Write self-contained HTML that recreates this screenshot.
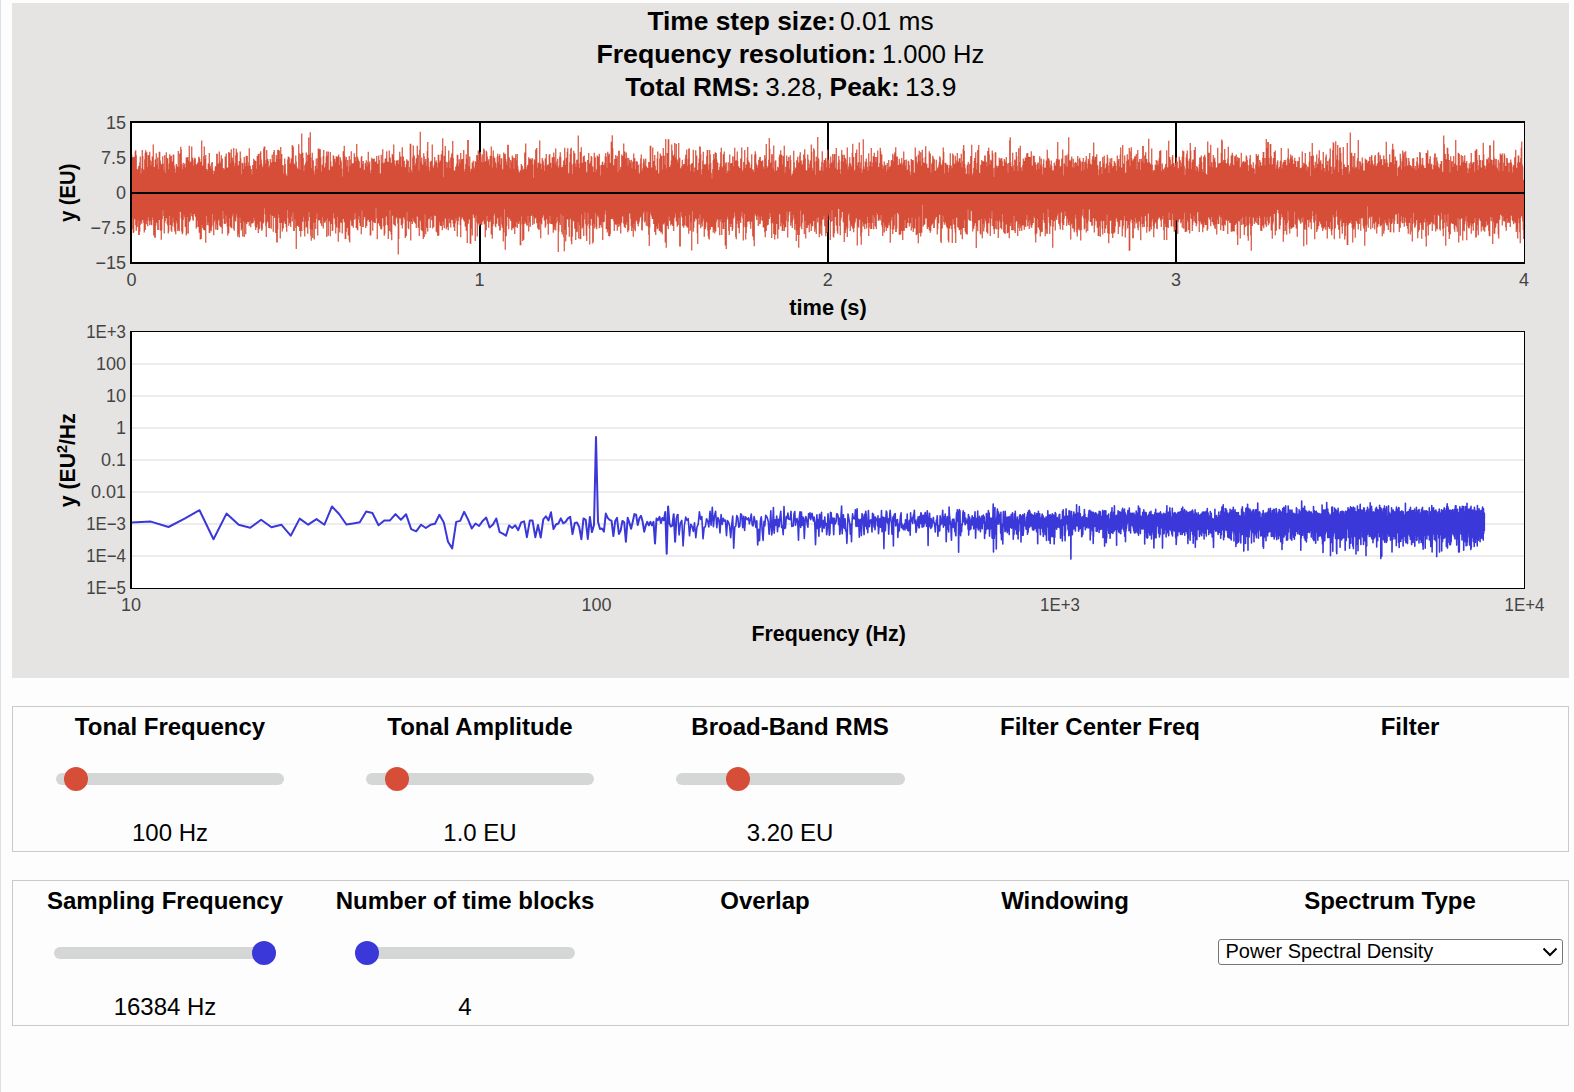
<!DOCTYPE html>
<html><head><meta charset="utf-8">
<style>
html,body{margin:0;padding:0;background:#fdfdfd;width:1574px;height:1092px;overflow:hidden;position:relative;font-family:"Liberation Sans",sans-serif;}
#stripe{position:absolute;left:0;top:0;width:1px;height:1092px;background:#dde1e4;}
#panel{position:absolute;left:12px;top:3px;width:1557px;height:675px;background:#e5e4e2;}
svg{position:absolute;left:0;top:0;}
.box{position:absolute;left:12px;width:1555px;height:144px;border:1px solid #cacac8;}
.t{position:absolute;font-weight:bold;font-size:24px;color:#000;white-space:nowrap;line-height:1;}
.v{position:absolute;font-size:24px;color:#000;white-space:nowrap;line-height:1;}
.track{position:absolute;height:12px;border-radius:6px;background:#d5d7d6;}
.th{position:absolute;width:24px;height:24px;border-radius:50%;}
.r{background:#d64e38;}
.b{background:#3a38d9;}
</style></head>
<body>
<div id="stripe"></div>
<div id="panel"></div>
<svg width="1574" height="680" viewBox="0 0 1574 680" font-family="Liberation Sans, sans-serif">
  <!-- header -->
  <g font-size="26" fill="#000">
    <text x="647.4" y="29.8" font-weight="bold" textLength="188.4" lengthAdjust="spacingAndGlyphs">Time step size:</text>
    <text x="840" y="29.8" textLength="93.6" lengthAdjust="spacingAndGlyphs">0.01 ms</text>
    <text x="596.4" y="62.8" font-weight="bold" textLength="280" lengthAdjust="spacingAndGlyphs">Frequency resolution:</text>
    <text x="882" y="62.8" textLength="102.2" lengthAdjust="spacingAndGlyphs">1.000 Hz</text>
    <text x="625.2" y="95.9" font-weight="bold" textLength="134.6" lengthAdjust="spacingAndGlyphs">Total RMS:</text>
    <text x="765.2" y="95.9" textLength="57.8" lengthAdjust="spacingAndGlyphs">3.28,</text>
    <text x="829.6" y="95.9" font-weight="bold" textLength="70.2" lengthAdjust="spacingAndGlyphs">Peak:</text>
    <text x="905" y="95.9" textLength="51.4" lengthAdjust="spacingAndGlyphs">13.9</text>
  </g>

  <!-- plot 1 -->
  <rect x="131" y="122" width="1393" height="141" fill="#fff"/>
  <g fill="#000">
    <rect x="479" y="122" width="2" height="141"/>
    <rect x="827" y="122" width="2" height="141"/>
    <rect x="1175" y="122" width="2" height="141"/>
  </g>
  <path d="M131.25 154.8V223.5M131.75 154.8V217.5M132.25 157.9V215.8M132.75 157.2V229.2M133.25 157.2V233.0M133.75 169.8V232.2M134.25 156.8V219.2M134.75 170.8V219.2M135.25 151.5V210.8M135.75 150.3V225.2M136.25 155.3V230.7M136.75 169.0V217.1M137.25 169.8V227.0M137.75 173.9V220.3M138.25 168.5V216.3M138.75 166.0V234.9M139.25 170.6V234.9M139.75 162.6V231.8M140.25 156.6V224.8M140.75 173.8V221.4M141.25 174.9V219.3M141.75 168.2V223.8M142.25 150.0V210.6M142.75 156.1V220.1M143.25 169.3V219.1M143.75 173.5V222.7M144.25 169.7V232.5M144.75 159.3V225.0M145.25 152.7V230.1M145.75 150.2V204.9M146.25 160.2V224.2M146.75 152.3V211.5M147.25 166.9V220.4M147.75 174.1V226.2M148.25 155.2V217.3M148.75 155.2V205.7M149.25 166.4V220.9M149.75 151.8V225.2M150.25 160.0V217.0M150.75 169.5V220.9M151.25 165.4V224.4M151.75 161.2V225.3M152.25 156.5V216.9M152.75 162.0V217.4M153.25 144.6V219.9M153.75 174.2V235.6M154.25 167.1V231.2M154.75 168.7V237.8M155.25 159.4V237.8M155.75 161.7V225.8M156.25 153.2V218.4M156.75 165.1V222.7M157.25 164.6V219.2M157.75 157.6V230.0M158.25 170.0V230.0M158.75 169.0V220.1M159.25 151.8V220.1M159.75 151.8V217.9M160.25 160.6V230.3M160.75 163.5V230.8M161.25 173.3V239.8M161.75 164.2V230.3M162.25 170.7V218.9M162.75 156.3V210.2M163.25 163.4V202.6M163.75 170.2V216.0M164.25 173.1V233.6M164.75 155.2V223.0M165.25 172.9V221.1M165.75 173.0V217.8M166.25 152.3V218.3M166.75 162.7V204.5M167.25 158.2V223.9M167.75 158.2V225.4M168.25 169.3V233.6M168.75 175.1V231.6M169.25 163.6V216.0M169.75 154.3V209.0M170.25 156.4V225.1M170.75 169.3V212.2M171.25 155.7V230.3M171.75 176.5V231.8M172.25 161.4V225.8M172.75 161.4V217.7M173.25 154.5V211.6M173.75 154.7V222.7M174.25 165.6V227.2M174.75 168.5V231.6M175.25 172.8V227.1M175.75 175.3V234.3M176.25 164.0V220.9M176.75 165.7V206.1M177.25 167.1V223.6M177.75 173.5V231.1M178.25 151.1V228.9M178.75 167.3V227.1M179.25 175.6V231.2M179.75 153.6V210.5M180.25 159.5V212.1M180.75 146.8V210.1M181.25 149.6V218.4M181.75 164.3V231.6M182.25 169.2V234.3M182.75 175.6V232.8M183.25 162.7V219.9M183.75 166.3V210.7M184.25 167.4V215.2M184.75 163.4V217.6M185.25 167.8V227.0M185.75 171.5V227.0M186.25 157.4V235.4M186.75 157.4V233.5M187.25 162.0V212.1M187.75 157.0V217.0M188.25 160.2V233.7M188.75 160.2V218.1M189.25 145.7V222.0M189.75 175.6V214.8M190.25 162.5V220.3M190.75 161.4V213.0M191.25 161.4V208.9M191.75 146.5V216.2M192.25 181.5V214.5M192.75 157.8V219.6M193.25 165.4V220.7M193.75 169.5V211.5M194.25 160.3V213.9M194.75 157.8V212.3M195.25 158.5V215.9M195.75 164.2V217.0M196.25 164.3V228.5M196.75 164.6V227.0M197.25 165.8V220.8M197.75 162.5V209.1M198.25 162.5V226.9M198.75 156.8V214.7M199.25 157.4V232.8M199.75 159.0V232.8M200.25 171.2V239.5M200.75 161.7V220.3M201.25 163.0V239.0M201.75 140.6V212.0M202.25 169.0V225.1M202.75 165.6V228.2M203.25 171.2V211.3M203.75 155.9V229.9M204.25 146.5V226.6M204.75 163.7V230.6M205.25 158.8V230.6M205.75 154.9V242.8M206.25 174.0V215.8M206.75 168.9V207.1M207.25 177.5V225.2M207.75 170.8V222.4M208.25 163.6V218.3M208.75 163.2V225.6M209.25 153.1V232.9M209.75 164.2V232.9M210.25 166.1V226.9M210.75 172.0V230.0M211.25 168.6V231.2M211.75 162.8V227.0M212.25 162.0V214.1M212.75 169.8V214.1M213.25 174.1V225.3M213.75 176.1V235.3M214.25 171.0V221.7M214.75 171.7V217.2M215.25 167.3V219.5M215.75 166.1V229.4M216.25 169.4V224.4M216.75 153.8V221.1M217.25 153.8V230.0M217.75 174.6V229.8M218.25 163.4V220.5M218.75 168.4V219.5M219.25 151.4V209.4M219.75 161.2V225.8M220.25 163.2V225.8M220.75 165.4V227.0M221.25 155.2V227.6M221.75 162.2V218.0M222.25 158.6V233.8M222.75 168.9V211.1M223.25 168.1V207.3M223.75 169.8V218.8M224.25 175.3V223.7M224.75 168.6V218.9M225.25 156.4V224.1M225.75 161.9V215.6M226.25 153.5V210.0M226.75 168.1V222.7M227.25 167.8V226.6M227.75 167.6V235.6M228.25 171.4V214.9M228.75 152.0V233.2M229.25 164.5V218.3M229.75 152.8V204.2M230.25 167.8V226.3M230.75 162.8V227.6M231.25 149.2V217.6M231.75 168.7V228.2M232.25 157.5V216.4M232.75 160.7V212.9M233.25 163.1V213.8M233.75 147.9V229.0M234.25 169.0V230.7M234.75 166.3V220.7M235.25 163.1V219.7M235.75 155.3V221.5M236.25 148.7V214.5M236.75 159.7V204.0M237.25 152.6V217.6M237.75 165.2V236.7M238.25 174.8V234.0M238.75 165.6V224.7M239.25 161.0V237.5M239.75 164.3V209.6M240.25 151.6V217.8M240.75 158.2V223.0M241.25 174.2V230.5M241.75 174.4V228.6M242.25 162.7V222.4M242.75 163.4V236.4M243.25 172.7V214.4M243.75 169.0V221.4M244.25 156.9V236.9M244.75 163.1V212.4M245.25 166.2V222.4M245.75 175.7V234.3M246.25 155.8V215.1M246.75 164.0V224.1M247.25 155.9V213.5M247.75 171.7V221.9M248.25 166.0V221.9M248.75 162.2V209.9M249.25 148.3V225.8M249.75 168.7V220.9M250.25 165.7V219.0M250.75 173.3V227.2M251.25 169.1V221.5M251.75 174.6V223.6M252.25 180.4V223.6M252.75 164.9V217.5M253.25 167.8V222.7M253.75 158.8V213.9M254.25 165.0V217.7M254.75 160.3V221.1M255.25 169.4V226.6M255.75 160.9V230.0M256.25 168.7V223.1M256.75 170.5V227.4M257.25 156.1V216.9M257.75 164.0V224.3M258.25 154.0V232.9M258.75 154.0V229.2M259.25 164.8V229.2M259.75 177.8V216.5M260.25 153.0V221.7M260.75 151.2V221.4M261.25 159.4V227.8M261.75 163.7V230.8M262.25 167.5V229.4M262.75 178.8V223.6M263.25 166.0V223.6M263.75 148.6V221.9M264.25 146.4V204.0M264.75 146.4V208.2M265.25 166.4V214.2M265.75 163.6V226.3M266.25 160.0V237.1M266.75 150.0V223.3M267.25 167.5V221.4M267.75 158.8V206.1M268.25 161.1V221.5M268.75 167.5V228.0M269.25 167.5V218.5M269.75 165.4V228.2M270.25 159.1V214.4M270.75 169.9V210.4M271.25 162.4V228.8M271.75 167.1V215.4M272.25 154.4V212.8M272.75 172.0V215.9M273.25 161.5V231.7M273.75 152.0V211.5M274.25 150.1V216.0M274.75 162.4V218.0M275.25 162.0V218.0M275.75 176.6V233.1M276.25 154.9V225.3M276.75 172.6V242.4M277.25 158.8V242.4M277.75 150.0V229.5M278.25 149.8V214.5M278.75 166.9V210.8M279.25 150.6V218.0M279.75 161.8V223.1M280.25 159.3V238.5M280.75 146.9V223.1M281.25 158.0V223.1M281.75 154.1V212.7M282.25 171.7V231.5M282.75 165.1V228.4M283.25 177.0V228.4M283.75 173.5V222.7M284.25 165.5V220.9M284.75 158.5V202.4M285.25 164.0V223.9M285.75 172.9V217.9M286.25 174.9V227.2M286.75 175.9V231.7M287.25 180.2V209.9M287.75 159.5V209.0M288.25 156.4V218.2M288.75 156.9V225.7M289.25 157.4V211.8M289.75 176.9V223.2M290.25 164.1V222.8M290.75 162.5V226.9M291.25 158.5V216.5M291.75 159.3V212.3M292.25 145.1V221.4M292.75 162.1V205.3M293.25 146.5V212.5M293.75 173.7V230.9M294.25 163.4V230.9M294.75 164.7V219.3M295.25 169.0V201.9M295.75 155.6V228.1M296.25 161.4V249.0M296.75 166.7V224.6M297.25 171.5V225.9M297.75 168.6V222.5M298.25 172.1V225.2M298.75 144.3V226.9M299.25 153.1V219.9M299.75 170.4V231.0M300.25 169.8V222.1M300.75 154.1V236.7M301.25 175.5V230.2M301.75 133.5V231.0M302.25 166.8V213.0M302.75 152.8V221.8M303.25 158.0V215.8M303.75 175.1V216.7M304.25 171.0V230.3M304.75 165.3V236.5M305.25 164.6V221.2M305.75 162.8V214.2M306.25 152.6V227.6M306.75 161.2V227.3M307.25 171.8V222.6M307.75 154.7V233.8M308.25 158.5V221.1M308.75 137.5V212.1M309.25 157.5V210.7M309.75 154.3V217.1M310.25 132.2V228.9M310.75 157.5V235.8M311.25 175.7V240.7M311.75 168.1V226.2M312.25 152.8V229.4M312.75 160.3V237.9M313.25 160.4V209.8M313.75 170.6V222.8M314.25 177.1V239.6M314.75 174.2V222.6M315.25 165.9V220.3M315.75 173.2V228.9M316.25 158.6V219.1M316.75 168.8V212.8M317.25 172.4V213.6M317.75 158.2V235.6M318.25 148.6V219.5M318.75 148.6V220.4M319.25 153.4V213.5M319.75 149.2V220.3M320.25 149.2V216.5M320.75 157.6V223.6M321.25 171.6V223.2M321.75 174.3V226.0M322.25 164.8V214.2M322.75 164.6V216.9M323.25 156.1V228.5M323.75 150.1V220.0M324.25 180.0V221.2M324.75 168.1V222.9M325.25 166.7V221.8M325.75 163.0V220.1M326.25 156.5V214.6M326.75 151.5V237.0M327.25 159.6V218.6M327.75 155.4V218.6M328.25 151.4V235.8M328.75 170.1V213.2M329.25 174.7V221.5M329.75 169.7V213.9M330.25 152.0V236.3M330.75 161.2V209.4M331.25 166.7V224.1M331.75 178.7V224.1M332.25 166.3V231.0M332.75 167.4V230.5M333.25 155.3V213.2M333.75 156.3V211.2M334.25 167.0V218.5M334.75 158.9V215.0M335.25 162.2V224.5M335.75 172.1V233.4M336.25 156.2V222.7M336.75 165.2V227.5M337.25 156.7V213.3M337.75 156.4V216.9M338.25 156.4V241.8M338.75 154.5V227.9M339.25 168.7V225.5M339.75 165.2V232.4M340.25 157.2V214.4M340.75 159.7V222.5M341.25 161.5V209.8M341.75 168.6V223.0M342.25 176.6V233.4M342.75 177.5V217.3M343.25 151.2V219.1M343.75 165.0V208.3M344.25 145.8V222.3M344.75 155.8V215.0M345.25 159.4V239.1M345.75 169.5V239.1M346.25 157.0V231.9M346.75 173.8V227.9M347.25 166.2V227.7M347.75 160.0V222.5M348.25 172.5V235.4M348.75 171.8V225.5M349.25 156.0V240.2M349.75 166.3V242.5M350.25 173.5V219.0M350.75 159.4V219.8M351.25 151.3V221.2M351.75 163.8V225.8M352.25 164.3V225.8M352.75 163.6V220.2M353.25 163.0V227.8M353.75 171.3V213.1M354.25 153.2V219.8M354.75 159.6V212.9M355.25 157.0V206.1M355.75 161.2V218.7M356.25 163.7V228.0M356.75 143.9V218.2M357.25 156.6V229.8M357.75 157.5V230.3M358.25 159.6V219.4M358.75 162.1V215.3M359.25 161.3V216.1M359.75 168.1V223.0M360.25 173.8V225.9M360.75 167.8V226.0M361.25 157.3V234.3M361.75 155.9V208.7M362.25 164.1V210.4M362.75 164.4V226.9M363.25 160.9V226.9M363.75 177.4V219.4M364.25 170.1V216.5M364.75 169.4V217.1M365.25 163.2V201.7M365.75 168.3V228.0M366.25 160.2V218.1M366.75 173.9V226.1M367.25 166.6V220.7M367.75 161.8V216.9M368.25 151.7V219.7M368.75 164.3V206.9M369.25 166.4V222.1M369.75 161.4V217.5M370.25 172.9V235.4M370.75 177.0V235.4M371.25 170.1V216.5M371.75 157.7V220.5M372.25 162.5V213.2M372.75 159.1V230.7M373.25 159.1V217.5M373.75 170.7V222.2M374.25 158.5V220.4M374.75 162.0V223.1M375.25 161.9V223.1M375.75 161.6V208.3M376.25 165.9V208.0M376.75 156.0V218.6M377.25 169.2V239.2M377.75 163.8V215.2M378.25 167.5V223.5M378.75 155.5V206.7M379.25 159.9V223.2M379.75 175.5V225.9M380.25 173.5V226.2M380.75 174.8V228.8M381.25 154.7V229.6M381.75 163.2V228.4M382.25 165.1V210.0M382.75 149.2V218.2M383.25 163.6V217.0M383.75 168.4V226.3M384.25 162.6V235.8M384.75 170.6V233.8M385.25 158.8V225.5M385.75 161.9V215.0M386.25 157.9V216.5M386.75 151.2V215.3M387.25 174.0V224.7M387.75 161.8V225.5M388.25 161.8V238.9M388.75 165.3V222.1M389.25 150.5V231.1M389.75 168.3V206.9M390.25 157.5V210.3M390.75 168.8V231.9M391.25 162.8V234.6M391.75 167.5V240.3M392.25 154.1V208.2M392.75 155.2V215.8M393.25 165.5V215.8M393.75 144.6V224.1M394.25 160.2V225.1M394.75 163.7V215.1M395.25 166.1V226.2M395.75 167.7V219.2M396.25 160.5V207.7M396.75 160.4V217.5M397.25 164.1V212.6M397.75 160.2V223.6M398.25 173.6V254.4M398.75 164.0V239.0M399.25 159.4V215.9M399.75 151.8V218.5M400.25 164.4V218.5M400.75 156.6V216.2M401.25 166.7V225.0M401.75 175.0V219.6M402.25 147.3V228.4M402.75 167.7V223.5M403.25 156.5V214.4M403.75 161.5V217.5M404.25 160.8V217.5M404.75 167.1V219.4M405.25 169.3V238.0M405.75 167.7V220.5M406.25 164.2V236.2M406.75 159.2V211.2M407.25 160.4V212.0M407.75 168.0V221.0M408.25 160.7V227.9M408.75 172.3V229.2M409.25 172.6V222.1M409.75 166.9V221.2M410.25 143.8V220.3M410.75 143.8V240.4M411.25 169.8V217.2M411.75 172.3V221.8M412.25 178.7V224.0M412.75 157.6V218.2M413.25 145.6V217.6M413.75 162.3V221.6M414.25 155.5V210.5M414.75 165.7V222.7M415.25 173.4V220.0M415.75 163.3V223.9M416.25 158.3V228.1M416.75 159.8V215.9M417.25 145.7V205.6M417.75 163.2V216.9M418.25 154.7V227.8M418.75 170.4V227.5M419.25 171.9V236.1M419.75 149.8V220.0M420.25 131.8V217.6M420.75 162.5V221.4M421.25 161.9V230.0M421.75 157.5V219.1M422.25 168.6V231.2M422.75 164.6V215.6M423.25 164.6V238.9M423.75 153.2V237.0M424.25 156.6V237.0M424.75 163.2V210.3M425.25 161.8V214.4M425.75 158.9V234.3M426.25 165.7V222.1M426.75 166.9V227.8M427.25 151.1V209.9M427.75 142.0V231.5M428.25 158.0V219.6M428.75 167.0V216.6M429.25 172.4V218.5M429.75 171.1V218.8M430.25 161.7V228.0M430.75 163.7V205.8M431.25 160.8V216.3M431.75 160.8V220.3M432.25 144.6V212.2M432.75 166.5V228.4M433.25 173.2V215.0M433.75 168.3V226.9M434.25 164.8V215.2M434.75 157.1V213.2M435.25 162.0V216.1M435.75 166.3V206.9M436.25 160.5V231.7M436.75 162.9V231.7M437.25 167.6V232.7M437.75 175.6V236.0M438.25 154.7V217.4M438.75 154.7V235.4M439.25 167.2V221.6M439.75 162.5V221.7M440.25 160.6V225.2M440.75 165.7V226.1M441.25 154.2V226.1M441.75 162.5V219.6M442.25 150.5V230.3M442.75 138.3V221.4M443.25 178.0V219.7M443.75 176.9V225.3M444.25 155.8V228.3M444.75 171.1V212.6M445.25 146.0V218.5M445.75 164.4V215.0M446.25 161.8V229.3M446.75 167.8V219.6M447.25 170.8V227.2M447.75 162.3V227.2M448.25 167.3V230.3M448.75 150.5V214.0M449.25 160.4V218.6M449.75 167.9V223.2M450.25 174.1V219.8M450.75 157.4V227.6M451.25 157.4V219.4M451.75 154.0V204.5M452.25 152.8V219.9M452.75 141.1V219.9M453.25 157.9V223.8M453.75 172.2V227.2M454.25 170.2V224.4M454.75 176.9V231.0M455.25 170.9V223.5M455.75 166.6V218.3M456.25 173.1V216.3M456.75 163.8V220.8M457.25 154.8V236.6M457.75 154.8V224.5M458.25 174.1V221.1M458.75 166.0V217.4M459.25 159.3V216.5M459.75 163.3V213.3M460.25 171.7V225.1M460.75 153.1V237.3M461.25 171.8V219.6M461.75 159.7V214.0M462.25 158.9V217.6M462.75 171.5V215.9M463.25 158.8V218.9M463.75 150.1V219.9M464.25 174.4V221.5M464.75 171.5V214.5M465.25 169.0V226.5M465.75 164.1V224.6M466.25 154.3V230.7M466.75 158.7V218.4M467.25 167.1V243.0M467.75 140.1V218.6M468.25 140.1V223.8M468.75 165.9V218.9M469.25 168.4V219.5M469.75 156.4V211.3M470.25 171.6V243.8M470.75 171.4V243.8M471.25 168.8V212.2M471.75 178.1V228.8M472.25 162.5V235.5M472.75 166.5V212.7M473.25 160.8V214.1M473.75 166.6V215.2M474.25 168.5V218.0M474.75 180.7V217.3M475.25 161.3V241.0M475.75 162.3V215.6M476.25 170.7V215.6M476.75 154.9V222.6M477.25 155.6V236.5M477.75 172.2V224.3M478.25 150.4V210.4M478.75 168.0V223.1M479.25 159.9V225.9M479.75 153.4V216.2M480.25 151.9V224.6M480.75 156.5V224.3M481.25 161.9V220.4M481.75 174.9V224.9M482.25 154.2V216.0M482.75 162.5V221.7M483.25 165.8V218.9M483.75 148.5V220.1M484.25 149.7V224.2M484.75 162.2V213.1M485.25 161.2V237.3M485.75 178.1V224.8M486.25 150.7V230.2M486.75 152.3V214.8M487.25 156.5V215.9M487.75 167.4V221.3M488.25 161.2V216.0M488.75 159.2V227.8M489.25 165.0V219.9M489.75 171.3V222.0M490.25 155.8V217.2M490.75 157.3V220.0M491.25 146.4V234.6M491.75 156.4V225.2M492.25 177.8V238.7M492.75 167.4V226.0M493.25 150.4V224.1M493.75 156.2V215.5M494.25 166.5V207.8M494.75 157.9V213.6M495.25 161.9V225.7M495.75 163.4V227.3M496.25 172.3V212.1M496.75 167.8V223.7M497.25 156.8V213.3M497.75 153.8V218.2M498.25 162.2V212.0M498.75 162.2V226.0M499.25 155.9V224.3M499.75 154.2V230.4M500.25 164.4V230.4M500.75 164.6V216.7M501.25 158.2V215.2M501.75 158.3V224.4M502.25 168.7V227.8M502.75 177.2V227.2M503.25 169.8V241.5M503.75 152.6V232.4M504.25 154.5V209.2M504.75 159.7V208.9M505.25 153.8V249.7M505.75 158.9V226.2M506.25 161.6V236.2M506.75 164.9V226.0M507.25 166.7V214.0M507.75 144.7V216.8M508.25 144.7V217.5M508.75 157.2V229.2M509.25 157.4V217.2M509.75 173.2V218.8M510.25 168.4V217.3M510.75 159.9V221.0M511.25 168.6V221.0M511.75 162.1V230.2M512.25 155.5V219.5M512.75 166.2V228.1M513.25 157.6V228.4M513.75 174.1V226.8M514.25 168.8V221.9M514.75 158.0V233.9M515.25 159.3V218.8M515.75 154.3V227.0M516.25 160.4V222.2M516.75 171.5V219.8M517.25 154.0V228.1M517.75 165.7V222.5M518.25 169.6V209.6M518.75 172.2V224.1M519.25 172.2V221.4M519.75 172.5V217.1M520.25 170.2V245.2M520.75 172.9V245.2M521.25 164.0V216.3M521.75 166.0V205.9M522.25 165.7V224.5M522.75 176.4V241.1M523.25 170.3V212.4M523.75 168.7V239.7M524.25 172.3V224.0M524.75 152.4V215.7M525.25 160.9V220.9M525.75 143.5V223.4M526.25 169.2V213.0M526.75 172.8V225.3M527.25 166.7V225.7M527.75 164.7V215.9M528.25 169.7V215.9M528.75 157.2V231.5M529.25 164.4V222.3M529.75 158.7V216.3M530.25 158.5V226.8M530.75 178.2V213.8M531.25 159.4V216.0M531.75 166.0V212.4M532.25 158.0V214.5M532.75 164.4V224.9M533.25 178.3V216.4M533.75 178.1V216.4M534.25 159.3V223.7M534.75 160.5V216.8M535.25 162.8V218.6M535.75 149.4V217.4M536.25 152.3V217.3M536.75 148.1V223.2M537.25 167.7V221.3M537.75 172.6V228.5M538.25 162.5V228.5M538.75 166.9V229.8M539.25 163.4V229.8M539.75 140.4V215.1M540.25 171.2V222.3M540.75 163.4V238.2M541.25 169.0V215.3M541.75 174.4V224.3M542.25 157.9V217.9M542.75 159.8V216.5M543.25 161.5V214.8M543.75 165.2V212.4M544.25 171.2V220.6M544.75 171.0V220.4M545.25 158.6V227.8M545.75 158.6V225.7M546.25 154.0V210.4M546.75 168.6V219.2M547.25 165.8V218.0M547.75 164.5V224.1M548.25 164.5V234.7M548.75 168.7V212.0M549.25 154.4V223.4M549.75 154.3V210.1M550.25 169.3V215.9M550.75 162.8V224.1M551.25 173.2V220.3M551.75 167.4V224.0M552.25 157.2V223.9M552.75 157.2V224.5M553.25 161.6V232.7M553.75 152.5V227.7M554.25 157.0V229.7M554.75 167.7V226.6M555.25 163.6V221.6M555.75 148.5V230.4M556.25 161.3V223.2M556.75 165.7V208.9M557.25 166.0V217.0M557.75 158.7V221.5M558.25 167.9V252.0M558.75 174.5V231.6M559.25 165.8V222.4M559.75 156.6V222.7M560.25 152.2V224.9M560.75 157.0V211.6M561.25 169.9V214.1M561.75 167.5V232.0M562.25 167.1V234.5M562.75 167.3V212.3M563.25 165.1V216.1M563.75 160.6V237.0M564.25 163.8V251.2M564.75 147.7V227.7M565.25 164.8V229.8M565.75 164.8V241.5M566.25 157.8V234.7M566.75 163.6V214.6M567.25 152.0V219.4M567.75 148.3V219.2M568.25 175.0V218.3M568.75 173.4V227.1M569.25 172.8V236.7M569.75 162.2V219.7M570.25 153.9V218.2M570.75 149.1V216.4M571.25 147.7V241.0M571.75 164.8V244.3M572.25 173.9V236.4M572.75 180.8V220.3M573.25 163.4V220.3M573.75 150.8V221.6M574.25 155.8V211.3M574.75 153.2V228.7M575.25 163.3V228.7M575.75 174.4V240.0M576.25 166.9V232.2M576.75 160.1V210.9M577.25 159.6V231.8M577.75 164.1V221.9M578.25 135.5V214.1M578.75 163.6V238.5M579.25 168.0V225.3M579.75 168.8V220.0M580.25 152.0V239.3M580.75 152.1V239.1M581.25 147.3V214.6M581.75 164.5V211.8M582.25 162.8V228.4M582.75 169.5V226.8M583.25 156.6V220.1M583.75 162.3V235.9M584.25 155.6V219.5M584.75 167.5V211.2M585.25 161.8V212.2M585.75 161.8V224.3M586.25 171.4V235.6M586.75 179.9V240.9M587.25 172.7V226.1M587.75 159.9V213.0M588.25 161.6V207.2M588.75 153.0V223.9M589.25 163.9V228.6M589.75 163.9V244.4M590.25 162.9V225.6M590.75 161.2V208.4M591.25 156.1V219.1M591.75 157.1V211.5M592.25 174.2V226.0M592.75 166.4V243.6M593.25 173.0V241.8M593.75 172.0V223.9M594.25 152.8V223.2M594.75 156.8V228.5M595.25 157.6V213.0M595.75 171.7V209.4M596.25 176.7V226.8M596.75 168.9V229.3M597.25 155.4V216.5M597.75 156.9V215.2M598.25 172.5V206.4M598.75 156.6V217.8M599.25 153.7V228.3M599.75 165.5V217.9M600.25 175.6V224.9M600.75 177.2V220.2M601.25 164.9V227.6M601.75 178.0V222.0M602.25 162.6V217.9M602.75 161.5V240.0M603.25 173.1V218.0M603.75 165.0V222.2M604.25 165.9V221.5M604.75 163.1V214.5M605.25 156.3V205.6M605.75 153.1V210.4M606.25 156.8V229.0M606.75 167.7V229.0M607.25 168.1V232.6M607.75 151.7V230.1M608.25 155.9V230.1M608.75 155.2V236.0M609.25 153.4V210.7M609.75 168.4V236.6M610.25 162.8V234.0M610.75 165.8V219.0M611.25 141.7V219.0M611.75 158.1V217.3M612.25 135.3V219.2M612.75 148.2V216.3M613.25 166.4V218.5M613.75 165.3V221.2M614.25 174.9V231.1M614.75 159.0V212.4M615.25 161.3V224.4M615.75 155.0V224.4M616.25 158.4V224.8M616.75 169.0V220.0M617.25 155.9V230.8M617.75 181.8V223.8M618.25 172.2V210.3M618.75 150.8V227.0M619.25 150.7V224.6M619.75 169.8V216.0M620.25 177.6V225.8M620.75 167.1V233.4M621.25 174.5V216.7M621.75 154.4V222.7M622.25 164.6V207.8M622.75 155.8V216.4M623.25 157.4V210.0M623.75 143.6V223.8M624.25 151.6V226.5M624.75 151.6V227.3M625.25 165.5V227.9M625.75 158.8V220.3M626.25 152.4V224.8M626.75 161.7V218.5M627.25 157.7V221.9M627.75 165.5V232.2M628.25 167.5V219.3M628.75 157.9V230.5M629.25 170.5V206.4M629.75 160.3V213.4M630.25 165.3V211.1M630.75 162.9V218.7M631.25 159.8V226.1M631.75 176.4V231.1M632.25 168.5V227.5M632.75 161.6V220.3M633.25 179.5V236.7M633.75 153.4V221.3M634.25 158.4V223.8M634.75 158.1V229.7M635.25 169.6V231.2M635.75 169.1V220.0M636.25 161.2V220.4M636.75 161.2V220.4M637.25 162.1V222.0M637.75 172.7V224.0M638.25 164.8V226.2M638.75 172.6V223.4M639.25 173.7V221.4M639.75 174.1V218.5M640.25 163.7V217.2M640.75 158.4V214.6M641.25 154.5V216.5M641.75 170.7V229.9M642.25 170.7V230.4M642.75 168.2V221.3M643.25 163.1V213.6M643.75 158.8V211.2M644.25 160.4V209.5M644.75 171.2V222.5M645.25 165.5V213.6M645.75 158.6V221.0M646.25 166.6V225.7M646.75 166.8V211.9M647.25 170.6V206.5M647.75 168.0V226.5M648.25 168.0V222.5M648.75 162.0V234.7M649.25 162.0V246.0M649.75 175.7V227.7M650.25 145.8V208.5M650.75 145.8V212.6M651.25 170.3V215.0M651.75 167.5V216.4M652.25 175.2V219.1M652.75 147.4V219.1M653.25 173.9V215.7M653.75 161.0V224.0M654.25 160.7V210.7M654.75 154.9V232.0M655.25 165.8V222.0M655.75 173.3V235.1M656.25 169.9V226.5M656.75 172.3V225.7M657.25 158.4V229.2M657.75 151.5V228.2M658.25 173.9V218.6M658.75 174.2V223.2M659.25 172.7V231.0M659.75 158.8V225.1M660.25 153.5V230.6M660.75 166.2V232.5M661.25 155.7V232.0M661.75 155.7V209.0M662.25 169.4V234.2M662.75 174.1V223.1M663.25 148.0V223.7M663.75 156.2V224.6M664.25 155.8V220.1M664.75 164.7V222.7M665.25 167.2V242.4M665.75 139.0V242.4M666.25 168.5V247.7M666.75 173.6V222.8M667.25 153.1V225.9M667.75 157.0V207.6M668.25 139.3V229.2M668.75 139.3V216.6M669.25 169.3V211.7M669.75 167.1V221.1M670.25 174.5V221.1M670.75 164.9V225.4M671.25 160.5V224.3M671.75 144.5V224.3M672.25 150.5V224.3M672.75 171.0V226.0M673.25 155.4V222.5M673.75 164.2V231.0M674.25 154.4V218.8M674.75 143.0V217.0M675.25 159.8V213.6M675.75 157.3V211.9M676.25 144.0V221.5M676.75 159.5V217.2M677.25 159.5V226.8M677.75 166.8V221.0M678.25 162.5V225.0M678.75 143.0V215.3M679.25 158.8V217.9M679.75 157.8V246.6M680.25 173.4V246.6M680.75 168.3V212.1M681.25 170.4V212.1M681.75 166.2V216.4M682.25 159.7V218.0M682.75 165.6V226.2M683.25 173.1V215.5M683.75 164.0V227.8M684.25 164.0V214.3M684.75 177.5V225.3M685.25 158.7V215.8M685.75 154.7V215.8M686.25 155.8V226.2M686.75 149.6V225.4M687.25 170.3V227.7M687.75 165.7V219.1M688.25 159.0V227.0M688.75 148.9V233.7M689.25 148.3V214.9M689.75 164.8V203.6M690.25 172.7V230.7M690.75 170.9V222.2M691.25 163.8V215.2M691.75 165.3V250.6M692.25 163.1V209.1M692.75 171.4V211.2M693.25 149.7V231.7M693.75 171.9V227.9M694.25 173.5V220.6M694.75 167.4V221.4M695.25 170.3V213.2M695.75 150.2V218.7M696.25 159.2V218.1M696.75 155.4V219.6M697.25 171.2V233.3M697.75 170.0V244.0M698.25 170.6V218.0M698.75 162.9V218.0M699.25 158.5V224.6M699.75 146.2V209.1M700.25 147.1V214.6M700.75 154.3V228.2M701.25 174.6V223.5M701.75 179.4V217.8M702.25 169.3V226.6M702.75 160.5V221.4M703.25 151.8V218.8M703.75 165.4V215.4M704.25 164.6V236.8M704.75 164.3V221.2M705.25 167.6V229.3M705.75 164.8V227.3M706.25 163.6V214.1M706.75 155.9V222.3M707.25 149.9V214.7M707.75 149.9V230.4M708.25 169.7V236.3M708.75 170.1V238.4M709.25 164.4V239.5M709.75 149.9V224.4M710.25 154.4V229.7M710.75 163.0V208.5M711.25 173.0V227.1M711.75 178.4V216.6M712.25 182.7V227.1M712.75 169.1V213.6M713.25 160.2V232.4M713.75 154.1V229.1M714.25 159.8V229.8M714.75 158.9V233.5M715.25 152.2V214.6M715.75 164.9V231.5M716.25 153.0V222.3M716.75 159.4V203.1M717.25 162.9V219.5M717.75 162.4V214.7M718.25 172.8V227.6M718.75 170.1V219.0M719.25 174.1V219.7M719.75 166.9V235.3M720.25 163.3V221.8M720.75 152.3V215.1M721.25 147.7V219.3M721.75 166.2V235.0M722.25 176.2V223.0M722.75 167.8V223.0M723.25 154.2V229.0M723.75 162.5V229.0M724.25 151.5V221.9M724.75 165.5V219.7M725.25 174.0V245.4M725.75 163.0V222.6M726.25 162.2V248.9M726.75 173.0V219.5M727.25 173.4V211.1M727.75 170.6V216.8M728.25 162.2V219.6M728.75 173.3V230.7M729.25 171.1V235.0M729.75 154.5V223.8M730.25 172.0V217.2M730.75 164.0V227.0M731.25 163.1V213.3M731.75 163.1V223.9M732.25 164.0V230.9M732.75 156.2V228.9M733.25 166.2V217.2M733.75 171.1V218.4M734.25 156.7V209.2M734.75 147.7V212.4M735.25 164.7V216.5M735.75 160.7V237.1M736.25 160.2V239.3M736.75 166.3V223.9M737.25 151.6V221.0M737.75 160.9V211.2M738.25 166.8V227.9M738.75 166.3V216.6M739.25 173.4V233.3M739.75 167.9V220.6M740.25 175.0V217.4M740.75 158.6V222.9M741.25 167.4V216.6M741.75 147.4V212.0M742.25 171.4V211.1M742.75 171.4V218.5M743.25 169.5V240.6M743.75 161.9V226.8M744.25 167.4V214.1M744.75 150.1V208.6M745.25 169.6V227.3M745.75 168.0V239.5M746.25 164.5V232.9M746.75 164.5V227.1M747.25 157.6V213.9M747.75 147.0V221.8M748.25 160.4V214.6M748.75 163.2V221.5M749.25 162.2V218.2M749.75 179.1V220.9M750.25 167.8V224.3M750.75 168.9V228.7M751.25 164.3V217.2M751.75 154.3V221.8M752.25 171.3V220.5M752.75 169.5V236.4M753.25 169.5V226.0M753.75 172.0V240.2M754.25 181.0V246.2M754.75 154.7V212.2M755.25 151.2V213.8M755.75 153.9V215.6M756.25 163.6V216.4M756.75 165.0V219.9M757.25 167.7V207.4M757.75 167.7V215.3M758.25 165.2V226.0M758.75 159.7V206.4M759.25 163.7V216.8M759.75 157.1V224.3M760.25 157.1V223.5M760.75 161.1V220.3M761.25 164.4V209.7M761.75 161.3V216.6M762.25 161.3V220.7M762.75 160.2V209.8M763.25 166.5V227.5M763.75 168.8V227.1M764.25 177.0V227.2M764.75 155.3V232.2M765.25 158.5V237.3M765.75 166.4V230.5M766.25 144.1V230.9M766.75 166.3V225.4M767.25 170.6V225.4M767.75 168.1V222.1M768.25 165.7V224.8M768.75 159.7V212.4M769.25 137.9V219.0M769.75 148.7V209.1M770.25 162.7V213.1M770.75 165.7V217.0M771.25 162.5V223.2M771.75 154.2V238.0M772.25 154.2V212.7M772.75 177.8V222.5M773.25 168.5V223.8M773.75 145.6V233.9M774.25 171.3V216.6M774.75 171.7V239.6M775.25 161.4V227.2M775.75 160.3V234.7M776.25 173.3V214.2M776.75 170.6V223.9M777.25 171.9V222.7M777.75 166.7V238.7M778.25 176.8V228.2M778.75 167.9V229.5M779.25 156.8V214.0M779.75 154.6V211.4M780.25 163.1V214.4M780.75 150.3V226.5M781.25 181.1V222.2M781.75 154.8V222.8M782.25 167.0V231.0M782.75 164.4V231.0M783.25 155.9V212.5M783.75 165.7V224.6M784.25 145.8V230.9M784.75 172.9V228.3M785.25 179.8V222.9M785.75 166.7V227.0M786.25 168.8V220.7M786.75 155.6V210.5M787.25 173.3V211.5M787.75 161.0V237.6M788.25 167.8V221.8M788.75 157.1V215.2M789.25 170.8V211.9M789.75 168.7V209.4M790.25 155.3V211.0M790.75 160.1V225.7M791.25 175.8V222.4M791.75 177.3V220.7M792.25 173.7V228.0M792.75 174.0V220.8M793.25 171.0V215.0M793.75 150.8V209.5M794.25 162.2V218.8M794.75 169.6V229.8M795.25 171.9V218.9M795.75 167.6V223.9M796.25 167.6V241.0M796.75 160.3V211.4M797.25 165.5V230.8M797.75 156.8V235.0M798.25 179.2V213.6M798.75 162.6V247.7M799.25 171.1V234.9M799.75 155.6V227.6M800.25 152.2V209.8M800.75 166.3V210.5M801.25 160.6V226.0M801.75 165.1V229.3M802.25 167.6V222.7M802.75 163.9V215.1M803.25 160.2V213.8M803.75 154.4V213.8M804.25 154.8V234.1M804.75 149.3V216.0M805.25 158.4V221.0M805.75 169.7V238.5M806.25 175.5V227.4M806.75 170.5V225.2M807.25 171.1V228.1M807.75 154.5V222.5M808.25 159.6V225.3M808.75 176.8V216.1M809.25 168.0V232.2M809.75 163.7V223.0M810.25 160.4V210.9M810.75 163.9V224.2M811.25 144.6V231.1M811.75 151.8V219.4M812.25 167.8V226.3M812.75 170.4V226.3M813.25 171.1V221.1M813.75 148.2V221.1M814.25 150.1V216.8M814.75 161.6V231.7M815.25 174.9V214.8M815.75 176.2V228.7M816.25 156.4V234.1M816.75 170.5V217.3M817.25 160.9V218.0M817.75 136.9V222.4M818.25 158.1V217.2M818.75 159.2V217.0M819.25 170.2V237.3M819.75 173.1V231.8M820.25 170.4V233.7M820.75 172.4V219.9M821.25 167.0V225.5M821.75 161.7V235.8M822.25 151.3V212.9M822.75 177.2V219.8M823.25 170.8V219.3M823.75 162.4V215.8M824.25 160.0V215.1M824.75 160.0V226.2M825.25 163.1V222.9M825.75 158.0V236.3M826.25 169.2V222.6M826.75 167.5V233.0M827.25 161.1V232.1M827.75 149.4V220.3M828.25 163.2V215.5M828.75 159.6V212.3M829.25 168.0V212.9M829.75 170.1V219.9M830.25 163.7V239.9M830.75 156.6V217.4M831.25 163.3V221.7M831.75 162.6V210.0M832.25 164.1V207.6M832.75 154.0V220.9M833.25 163.6V236.4M833.75 160.4V237.4M834.25 154.5V233.2M834.75 154.1V212.9M835.25 172.8V216.9M835.75 167.7V216.9M836.25 148.0V225.4M836.75 169.8V221.2M837.25 173.2V231.2M837.75 169.3V233.8M838.25 162.5V208.7M838.75 156.0V206.1M839.25 159.7V208.9M839.75 169.0V225.9M840.25 173.9V235.2M840.75 174.6V220.3M841.25 161.2V217.4M841.75 150.1V210.9M842.25 160.1V211.9M842.75 154.7V206.7M843.25 163.9V222.2M843.75 161.9V208.9M844.25 154.7V242.1M844.75 168.6V228.5M845.25 158.1V232.9M845.75 159.7V229.9M846.25 170.3V225.3M846.75 163.4V226.7M847.25 147.5V236.9M847.75 170.5V228.3M848.25 169.1V215.3M848.75 166.3V213.0M849.25 163.5V209.7M849.75 157.2V220.8M850.25 163.0V231.0M850.75 164.7V224.4M851.25 173.3V219.0M851.75 166.8V226.6M852.25 152.7V219.8M852.75 143.7V228.7M853.25 158.2V222.9M853.75 157.1V232.2M854.25 171.0V227.6M854.75 171.1V223.4M855.25 169.5V221.7M855.75 153.1V218.4M856.25 156.2V214.8M856.75 149.4V218.6M857.25 165.7V245.6M857.75 174.7V217.3M858.25 162.6V226.2M858.75 162.2V227.7M859.25 142.5V220.1M859.75 167.7V212.9M860.25 174.8V219.6M860.75 162.2V236.2M861.25 155.1V244.8M861.75 175.6V232.4M862.25 172.8V222.1M862.75 169.2V221.6M863.25 139.3V226.4M863.75 166.4V216.5M864.25 177.5V223.9M864.75 169.0V229.3M865.25 161.4V214.2M865.75 161.4V223.5M866.25 158.6V224.4M866.75 162.2V228.5M867.25 167.1V214.3M867.75 170.5V216.7M868.25 172.6V223.0M868.75 153.3V235.9M869.25 165.9V227.4M869.75 174.9V223.1M870.25 161.4V223.1M870.75 161.4V228.9M871.25 147.9V226.3M871.75 174.8V228.9M872.25 166.7V223.0M872.75 162.6V215.1M873.25 156.3V212.3M873.75 162.8V229.2M874.25 152.7V217.5M874.75 175.0V214.9M875.25 157.1V226.2M875.75 162.1V226.5M876.25 164.5V229.0M876.75 156.9V212.3M877.25 168.3V213.0M877.75 150.6V215.1M878.25 166.9V220.8M878.75 167.1V220.8M879.25 175.0V218.9M879.75 162.9V218.0M880.25 147.8V220.4M880.75 151.3V210.7M881.25 169.3V214.9M881.75 154.4V225.0M882.25 164.6V227.3M882.75 174.6V236.1M883.25 168.7V222.5M883.75 165.7V215.2M884.25 161.6V232.4M884.75 165.7V221.7M885.25 182.2V225.3M885.75 164.8V227.2M886.25 171.3V230.9M886.75 171.4V228.2M887.25 163.1V226.5M887.75 169.0V228.0M888.25 170.1V225.4M888.75 160.1V221.3M889.25 172.6V222.7M889.75 166.7V225.5M890.25 171.0V242.7M890.75 165.4V229.3M891.25 160.5V220.6M891.75 160.1V206.0M892.25 178.1V216.9M892.75 153.8V234.0M893.25 161.4V225.6M893.75 167.5V229.5M894.25 155.3V225.8M894.75 152.4V214.3M895.25 163.6V214.1M895.75 147.3V231.9M896.25 164.9V231.9M896.75 156.6V228.5M897.25 156.6V210.5M897.75 168.4V213.1M898.25 165.1V208.9M898.75 165.1V214.7M899.25 158.7V234.8M899.75 163.7V226.6M900.25 163.7V234.8M900.75 170.9V234.3M901.25 162.4V211.4M901.75 157.9V231.0M902.25 168.5V226.3M902.75 165.3V240.1M903.25 162.8V229.4M903.75 151.5V230.8M904.25 172.5V230.8M904.75 159.9V211.0M905.25 171.3V220.1M905.75 165.6V227.9M906.25 159.5V223.2M906.75 170.1V228.2M907.25 173.7V216.0M907.75 169.6V222.9M908.25 160.8V209.2M908.75 161.7V217.7M909.25 165.1V226.5M909.75 171.5V223.6M910.25 178.0V214.2M910.75 175.1V222.9M911.25 159.1V230.5M911.75 161.7V217.4M912.25 160.0V213.6M912.75 174.0V227.8M913.25 160.2V232.1M913.75 179.0V228.9M914.25 172.6V214.5M914.75 176.1V228.2M915.25 147.4V218.4M915.75 161.8V214.9M916.25 156.4V235.3M916.75 162.1V226.6M917.25 164.1V234.2M917.75 172.9V222.8M918.25 154.7V243.3M918.75 164.1V208.6M919.25 150.8V216.7M919.75 169.2V232.9M920.25 161.0V217.0M920.75 152.2V236.5M921.25 174.3V213.9M921.75 165.8V232.7M922.25 149.7V204.8M922.75 158.0V200.1M923.25 162.6V226.4M923.75 167.5V223.5M924.25 162.7V224.7M924.75 169.6V224.3M925.25 156.9V218.4M925.75 146.2V211.1M926.25 168.6V218.6M926.75 163.7V217.3M927.25 169.7V229.1M927.75 167.7V226.7M928.25 167.7V227.2M928.75 167.7V211.5M929.25 151.2V230.3M929.75 156.8V218.9M930.25 153.6V232.7M930.75 174.4V231.0M931.25 172.4V225.8M931.75 163.7V223.8M932.25 162.6V224.6M932.75 155.8V220.3M933.25 157.4V222.9M933.75 164.0V228.0M934.25 159.3V228.0M934.75 179.5V220.5M935.25 171.0V219.0M935.75 170.6V214.0M936.25 159.8V216.9M936.75 170.9V204.9M937.25 169.7V234.5M937.75 167.5V229.1M938.25 175.0V223.3M938.75 165.3V223.2M939.25 162.0V215.1M939.75 156.3V212.4M940.25 157.7V214.6M940.75 163.6V241.4M941.25 165.9V243.0M941.75 165.6V226.5M942.25 164.5V228.6M942.75 160.2V215.8M943.25 147.6V200.2M943.75 152.0V221.9M944.25 173.5V224.8M944.75 179.2V221.4M945.25 162.8V221.4M945.75 162.8V223.3M946.25 167.6V225.6M946.75 164.5V226.7M947.25 164.8V228.3M947.75 164.7V217.1M948.25 177.4V240.2M948.75 172.2V242.4M949.25 167.7V214.1M949.75 164.9V228.4M950.25 153.3V222.7M950.75 176.0V225.8M951.25 165.4V220.7M951.75 168.5V229.3M952.25 168.5V243.0M952.75 153.5V219.1M953.25 154.9V214.4M953.75 176.0V224.5M954.25 163.8V223.9M954.75 168.6V228.8M955.25 155.8V232.5M955.75 172.6V243.1M956.25 163.5V216.6M956.75 160.2V217.8M957.25 152.9V202.2M957.75 161.4V227.1M958.25 161.4V227.8M958.75 171.5V219.0M959.25 158.2V230.2M959.75 158.3V229.7M960.25 163.1V213.2M960.75 165.6V234.7M961.25 153.8V218.3M961.75 167.5V229.2M962.25 173.2V239.2M962.75 161.3V222.2M963.25 149.1V228.1M963.75 144.9V228.0M964.25 150.8V220.3M964.75 164.1V210.5M965.25 168.3V231.4M965.75 177.6V232.5M966.25 173.7V234.2M966.75 176.4V231.1M967.25 165.5V234.4M967.75 164.5V209.4M968.25 161.9V209.4M968.75 176.6V219.4M969.25 174.3V220.2M969.75 163.8V213.3M970.25 163.8V220.9M970.75 156.0V207.8M971.25 156.2V210.2M971.75 144.7V211.5M972.25 177.2V221.6M972.75 175.3V231.4M973.25 173.1V217.0M973.75 168.1V228.8M974.25 161.0V225.9M974.75 158.0V211.8M975.25 163.4V223.2M975.75 152.3V222.8M976.25 169.2V248.1M976.75 172.2V226.6M977.25 163.1V226.6M977.75 149.9V231.2M978.25 167.3V212.8M978.75 144.9V220.3M979.25 172.7V220.3M979.75 173.3V220.3M980.25 176.2V233.5M980.75 164.8V234.6M981.25 164.8V218.8M981.75 159.9V215.2M982.25 169.4V238.2M982.75 161.2V217.3M983.25 161.2V223.9M983.75 161.2V231.4M984.25 166.7V227.4M984.75 155.5V209.2M985.25 155.5V218.8M985.75 168.8V221.0M986.25 161.7V223.6M986.75 166.4V232.2M987.25 167.2V223.8M987.75 151.1V233.7M988.25 165.9V214.0M988.75 147.7V223.2M989.25 154.4V218.0M989.75 170.3V215.6M990.25 164.4V235.9M990.75 159.7V225.8M991.25 164.2V218.7M991.75 161.0V211.2M992.25 150.4V206.3M992.75 153.6V225.9M993.25 168.2V226.3M993.75 178.6V229.5M994.25 176.9V234.1M994.75 167.6V228.7M995.25 152.3V228.7M995.75 152.3V220.4M996.25 172.2V219.0M996.75 165.7V229.6M997.25 176.2V221.0M997.75 167.8V214.7M998.25 165.7V238.1M998.75 168.2V229.3M999.25 157.8V213.2M999.75 160.2V220.1M1000.25 171.3V222.3M1000.75 158.4V227.9M1001.25 175.8V227.4M1001.75 157.9V229.6M1002.25 161.2V208.8M1002.75 166.4V214.0M1003.25 166.0V221.7M1003.75 180.6V232.6M1004.25 158.9V225.3M1004.75 160.4V233.7M1005.25 163.0V233.7M1005.75 162.2V213.3M1006.25 156.9V224.6M1006.75 169.1V215.1M1007.25 163.5V233.3M1007.75 172.6V233.3M1008.25 173.6V232.0M1008.75 163.0V204.5M1009.25 166.7V238.3M1009.75 140.2V209.6M1010.25 137.3V226.0M1010.75 162.3V220.4M1011.25 165.9V222.9M1011.75 167.5V230.3M1012.25 168.8V230.3M1012.75 152.7V213.1M1013.25 165.3V230.3M1013.75 170.8V213.7M1014.25 173.4V215.8M1014.75 159.6V230.9M1015.25 160.5V232.9M1015.75 161.0V222.2M1016.25 152.0V220.9M1016.75 156.2V212.2M1017.25 165.8V221.3M1017.75 177.1V236.1M1018.25 171.2V228.1M1018.75 148.3V219.9M1019.25 162.1V223.9M1019.75 162.2V231.0M1020.25 145.8V228.2M1020.75 173.9V217.7M1021.25 167.2V225.8M1021.75 170.9V230.8M1022.25 171.0V213.4M1022.75 164.9V225.6M1023.25 158.5V225.2M1023.75 169.3V214.8M1024.25 161.0V229.8M1024.75 161.6V219.8M1025.25 157.6V225.7M1025.75 168.2V226.9M1026.25 157.7V219.9M1026.75 153.5V214.9M1027.25 161.8V212.2M1027.75 153.0V226.3M1028.25 158.0V222.0M1028.75 156.7V218.9M1029.25 173.7V229.1M1029.75 157.1V220.2M1030.25 165.9V220.2M1030.75 156.9V224.9M1031.25 151.3V227.6M1031.75 166.4V227.8M1032.25 165.6V224.9M1032.75 167.2V223.0M1033.25 155.6V223.0M1033.75 160.5V211.5M1034.25 156.0V216.5M1034.75 166.4V217.9M1035.25 162.3V234.5M1035.75 164.0V242.6M1036.25 173.0V233.4M1036.75 170.0V233.4M1037.25 165.1V219.1M1037.75 162.6V210.6M1038.25 162.6V227.6M1038.75 173.3V227.6M1039.25 168.7V228.4M1039.75 156.3V230.0M1040.25 171.4V236.5M1040.75 164.7V209.7M1041.25 158.5V232.3M1041.75 166.7V216.3M1042.25 174.5V231.7M1042.75 174.4V219.9M1043.25 163.9V211.8M1043.75 159.3V213.2M1044.25 167.6V222.8M1044.75 171.1V217.9M1045.25 167.7V236.2M1045.75 169.0V220.0M1046.25 160.4V229.2M1046.75 174.4V233.7M1047.25 149.8V233.7M1047.75 158.4V207.4M1048.25 159.3V209.0M1048.75 158.3V217.1M1049.25 160.5V223.1M1049.75 168.9V233.9M1050.25 167.4V226.3M1050.75 164.3V226.3M1051.25 160.5V219.6M1051.75 166.1V219.6M1052.25 177.8V220.0M1052.75 170.2V247.7M1053.25 176.9V226.4M1053.75 170.5V218.2M1054.25 162.8V221.1M1054.75 165.6V211.5M1055.25 165.6V230.4M1055.75 167.7V209.6M1056.25 160.9V218.2M1056.75 158.7V219.9M1057.25 166.8V215.7M1057.75 142.0V206.2M1058.25 159.4V213.4M1058.75 162.7V223.8M1059.25 159.4V219.0M1059.75 171.5V225.7M1060.25 167.6V229.4M1060.75 166.0V207.6M1061.25 167.2V212.6M1061.75 158.5V208.8M1062.25 175.9V222.7M1062.75 149.5V230.0M1063.25 183.8V214.4M1063.75 175.4V225.0M1064.25 163.6V218.4M1064.75 165.7V211.2M1065.25 155.6V210.6M1065.75 166.3V216.1M1066.25 171.7V213.2M1066.75 155.2V226.0M1067.25 168.0V215.3M1067.75 166.6V218.8M1068.25 153.5V223.2M1068.75 137.3V225.1M1069.25 161.5V215.0M1069.75 160.3V221.2M1070.25 161.2V226.1M1070.75 163.8V239.4M1071.25 159.5V224.6M1071.75 156.5V212.7M1072.25 175.8V223.6M1072.75 167.2V228.6M1073.25 158.7V228.6M1073.75 173.8V223.1M1074.25 167.5V232.3M1074.75 162.7V230.3M1075.25 171.0V214.8M1075.75 162.1V213.7M1076.25 162.9V218.8M1076.75 165.6V232.6M1077.25 169.4V236.6M1077.75 156.1V220.7M1078.25 170.7V229.7M1078.75 165.9V227.9M1079.25 159.2V223.3M1079.75 157.8V230.4M1080.25 160.6V220.7M1080.75 162.2V240.4M1081.25 173.2V229.9M1081.75 170.9V216.8M1082.25 161.4V215.5M1082.75 162.9V206.4M1083.25 158.0V209.2M1083.75 169.8V218.6M1084.25 171.8V229.5M1084.75 162.1V228.3M1085.25 170.3V213.0M1085.75 160.4V218.4M1086.25 156.0V232.5M1086.75 163.6V212.3M1087.25 169.8V223.3M1087.75 168.5V231.1M1088.25 158.7V220.4M1088.75 169.7V210.1M1089.25 160.8V208.8M1089.75 153.0V208.1M1090.25 163.5V221.9M1090.75 165.3V221.9M1091.25 164.4V213.1M1091.75 167.1V225.7M1092.25 159.3V225.7M1092.75 156.3V218.2M1093.25 156.0V213.3M1093.75 142.5V217.9M1094.25 159.7V232.4M1094.75 171.5V225.6M1095.25 156.8V218.8M1095.75 165.6V216.9M1096.25 156.9V221.2M1096.75 154.3V210.7M1097.25 168.9V227.8M1097.75 165.2V221.0M1098.25 182.7V235.9M1098.75 175.3V235.9M1099.25 169.3V226.3M1099.75 162.1V223.8M1100.25 161.1V236.7M1100.75 167.0V221.5M1101.25 167.1V220.5M1101.75 176.1V219.3M1102.25 173.9V228.5M1102.75 157.1V234.5M1103.25 163.3V213.5M1103.75 164.0V221.1M1104.25 155.8V218.0M1104.75 169.0V233.0M1105.25 173.4V225.4M1105.75 167.7V228.5M1106.25 163.5V225.1M1106.75 166.0V214.4M1107.25 154.8V212.4M1107.75 157.8V233.2M1108.25 165.5V225.3M1108.75 173.0V243.3M1109.25 174.0V234.0M1109.75 162.1V214.7M1110.25 158.6V221.0M1110.75 163.7V214.7M1111.25 170.4V220.1M1111.75 158.0V233.6M1112.25 174.9V229.4M1112.75 167.7V237.9M1113.25 166.1V233.4M1113.75 172.6V233.4M1114.25 160.9V201.7M1114.75 162.5V232.5M1115.25 163.1V226.4M1115.75 165.8V219.0M1116.25 171.3V217.7M1116.75 170.8V213.8M1117.25 155.5V221.7M1117.75 161.0V218.6M1118.25 164.5V234.0M1118.75 158.9V224.7M1119.25 167.8V214.4M1119.75 166.5V226.9M1120.25 154.4V220.2M1120.75 147.4V209.1M1121.25 168.4V220.3M1121.75 167.4V220.3M1122.25 178.0V236.6M1122.75 144.9V228.7M1123.25 163.5V225.7M1123.75 165.7V220.2M1124.25 163.8V214.2M1124.75 155.6V216.2M1125.25 172.7V237.5M1125.75 179.5V230.5M1126.25 172.6V216.8M1126.75 161.0V221.0M1127.25 154.3V217.7M1127.75 162.6V228.5M1128.25 159.4V219.8M1128.75 172.2V225.0M1129.25 148.1V250.8M1129.75 166.3V250.8M1130.25 172.3V221.8M1130.75 151.3V219.1M1131.25 147.3V211.2M1131.75 158.0V220.1M1132.25 164.4V223.3M1132.75 160.6V238.3M1133.25 179.7V238.3M1133.75 158.8V220.3M1134.25 166.5V221.6M1134.75 156.3V228.6M1135.25 156.6V216.5M1135.75 159.6V218.1M1136.25 154.1V223.5M1136.75 174.4V216.8M1137.25 169.3V221.6M1137.75 149.9V228.1M1138.25 162.1V230.2M1138.75 162.1V214.2M1139.25 163.1V221.6M1139.75 159.0V221.6M1140.25 173.7V226.7M1140.75 170.0V240.2M1141.25 158.7V216.4M1141.75 169.0V215.8M1142.25 161.3V224.1M1142.75 146.1V227.2M1143.25 146.1V223.8M1143.75 163.3V221.1M1144.25 166.8V227.0M1144.75 155.4V216.0M1145.25 166.7V204.5M1145.75 152.3V215.8M1146.25 159.1V221.3M1146.75 159.1V232.7M1147.25 171.7V227.0M1147.75 162.5V213.8M1148.25 163.7V213.6M1148.75 138.8V212.8M1149.25 161.9V231.4M1149.75 172.6V231.4M1150.25 163.5V226.7M1150.75 172.4V227.0M1151.25 164.7V229.5M1151.75 148.5V221.4M1152.25 164.8V214.8M1152.75 171.5V218.7M1153.25 171.4V225.9M1153.75 170.1V237.3M1154.25 170.5V228.5M1154.75 174.6V224.1M1155.25 164.8V222.6M1155.75 168.5V210.5M1156.25 160.1V222.5M1156.75 165.6V228.5M1157.25 165.7V229.1M1157.75 160.7V220.1M1158.25 178.4V218.5M1158.75 164.4V213.6M1159.25 158.3V217.6M1159.75 151.1V205.6M1160.25 152.5V219.1M1160.75 150.2V220.8M1161.25 173.8V227.1M1161.75 171.3V216.4M1162.25 163.5V219.6M1162.75 168.7V213.7M1163.25 168.9V215.8M1163.75 170.6V230.3M1164.25 172.7V240.0M1164.75 167.5V209.6M1165.25 167.2V223.8M1165.75 164.0V227.0M1166.25 164.0V222.6M1166.75 150.3V240.1M1167.25 167.9V218.3M1167.75 167.6V227.0M1168.25 167.3V227.9M1168.75 140.7V210.6M1169.25 167.0V212.5M1169.75 157.0V220.1M1170.25 159.5V220.1M1170.75 165.8V218.5M1171.25 173.9V226.5M1171.75 163.9V226.5M1172.25 156.9V210.4M1172.75 154.9V213.7M1173.25 169.1V219.7M1173.75 163.0V226.7M1174.25 173.0V231.7M1174.75 167.0V226.8M1175.25 164.6V230.0M1175.75 163.1V213.3M1176.25 157.4V219.6M1176.75 169.4V220.5M1177.25 161.5V218.1M1177.75 170.5V233.9M1178.25 168.2V221.9M1178.75 173.8V219.7M1179.25 156.8V219.3M1179.75 160.1V219.2M1180.25 160.6V216.3M1180.75 172.5V223.2M1181.25 166.6V213.5M1181.75 162.7V221.7M1182.25 156.7V227.7M1182.75 150.6V211.9M1183.25 158.4V218.9M1183.75 151.3V228.7M1184.25 165.9V212.8M1184.75 176.0V211.9M1185.25 175.0V232.0M1185.75 168.4V231.7M1186.25 157.3V211.2M1186.75 153.9V231.6M1187.25 150.5V213.9M1187.75 159.5V220.1M1188.25 172.8V222.2M1188.75 168.4V229.9M1189.25 161.3V211.7M1189.75 158.4V233.6M1190.25 143.0V212.5M1190.75 150.8V213.6M1191.25 168.9V218.6M1191.75 173.2V218.9M1192.25 162.3V231.0M1192.75 159.4V224.9M1193.25 159.4V221.5M1193.75 174.6V216.2M1194.25 150.1V216.2M1194.75 162.8V221.3M1195.25 147.1V223.0M1195.75 170.6V223.0M1196.25 176.9V226.3M1196.75 166.1V224.2M1197.25 167.1V212.6M1197.75 168.4V210.5M1198.25 171.8V211.8M1198.75 175.6V221.1M1199.25 164.2V232.0M1199.75 157.5V222.4M1200.25 157.5V215.9M1200.75 165.9V221.2M1201.25 155.5V224.4M1201.75 161.9V215.6M1202.25 169.1V223.5M1202.75 172.0V232.3M1203.25 177.6V219.8M1203.75 156.4V227.4M1204.25 161.1V222.4M1204.75 154.7V202.8M1205.25 157.2V225.0M1205.75 173.5V225.0M1206.25 173.7V225.1M1206.75 175.4V222.3M1207.25 175.1V230.8M1207.75 141.4V229.2M1208.25 157.0V214.6M1208.75 152.7V217.5M1209.25 152.7V210.1M1209.75 166.4V219.5M1210.25 174.7V217.5M1210.75 144.7V226.2M1211.25 163.0V216.9M1211.75 162.2V216.9M1212.25 167.3V222.1M1212.75 167.4V217.8M1213.25 155.0V224.0M1213.75 159.6V225.5M1214.25 167.5V220.5M1214.75 157.8V227.7M1215.25 161.7V229.1M1215.75 167.6V224.2M1216.25 167.7V222.4M1216.75 167.7V234.6M1217.25 166.9V219.8M1217.75 147.7V217.7M1218.25 168.9V224.1M1218.75 164.0V224.1M1219.25 163.0V215.2M1219.75 163.9V213.7M1220.25 163.5V217.1M1220.75 162.4V230.2M1221.25 152.9V204.1M1221.75 139.5V217.4M1222.25 140.7V225.4M1222.75 161.8V214.9M1223.25 162.9V231.0M1223.75 160.0V231.0M1224.25 163.6V222.4M1224.75 148.9V224.2M1225.25 160.1V225.5M1225.75 166.7V212.5M1226.25 163.2V219.6M1226.75 170.2V220.8M1227.25 163.2V217.2M1227.75 158.6V233.9M1228.25 146.8V220.6M1228.75 163.8V220.7M1229.25 171.8V220.6M1229.75 165.8V223.1M1230.25 166.1V223.1M1230.75 163.1V222.2M1231.25 155.5V231.8M1231.75 167.5V231.5M1232.25 152.7V231.5M1232.75 155.0V223.3M1233.25 164.4V231.2M1233.75 166.6V220.4M1234.25 165.4V231.4M1234.75 156.3V220.1M1235.25 156.3V224.9M1235.75 161.3V221.6M1236.25 154.5V223.4M1236.75 160.7V212.5M1237.25 168.9V234.8M1237.75 156.9V245.1M1238.25 169.6V220.9M1238.75 158.4V220.9M1239.25 158.0V213.3M1239.75 167.8V221.8M1240.25 168.6V238.6M1240.75 166.7V219.1M1241.25 152.8V217.0M1241.75 171.5V225.0M1242.25 164.1V217.0M1242.75 161.8V213.1M1243.25 165.3V224.3M1243.75 160.9V215.1M1244.25 162.6V235.0M1244.75 164.8V221.9M1245.25 161.7V227.2M1245.75 164.5V216.5M1246.25 155.4V213.3M1246.75 157.1V225.7M1247.25 160.1V225.7M1247.75 164.8V236.2M1248.25 171.3V240.8M1248.75 170.9V225.3M1249.25 165.2V216.7M1249.75 158.5V215.2M1250.25 155.0V223.5M1250.75 171.3V235.5M1251.25 164.5V250.8M1251.75 176.0V218.5M1252.25 167.7V225.9M1252.75 171.1V216.5M1253.25 162.3V217.0M1253.75 170.7V218.0M1254.25 168.5V223.9M1254.75 178.9V222.3M1255.25 173.8V214.3M1255.75 164.6V221.1M1256.25 154.0V223.1M1256.75 160.4V217.7M1257.25 156.1V217.7M1257.75 173.4V224.6M1258.25 154.5V224.7M1258.75 167.4V224.9M1259.25 166.6V215.8M1259.75 159.9V213.9M1260.25 163.1V218.1M1260.75 162.3V230.7M1261.25 169.8V222.8M1261.75 165.6V231.0M1262.25 176.0V224.5M1262.75 157.7V225.8M1263.25 151.9V214.1M1263.75 151.9V228.2M1264.25 157.9V211.5M1264.75 165.3V216.8M1265.25 180.5V224.4M1265.75 157.9V224.4M1266.25 139.0V227.0M1266.75 148.1V217.2M1267.25 168.7V212.4M1267.75 141.9V220.9M1268.25 141.9V225.4M1268.75 158.1V222.9M1269.25 172.8V223.5M1269.75 164.3V217.2M1270.25 144.0V215.8M1270.75 144.0V215.6M1271.25 156.3V230.5M1271.75 169.0V215.3M1272.25 165.1V238.7M1272.75 163.9V224.6M1273.25 158.0V222.2M1273.75 164.9V210.6M1274.25 152.1V213.9M1274.75 164.8V213.6M1275.25 150.5V235.2M1275.75 168.8V218.9M1276.25 174.6V230.7M1276.75 164.7V212.7M1277.25 162.1V209.6M1277.75 160.3V207.0M1278.25 169.3V210.1M1278.75 169.9V213.4M1279.25 167.5V229.2M1279.75 167.0V229.2M1280.25 161.6V225.5M1280.75 160.5V219.5M1281.25 147.9V212.1M1281.75 168.5V214.1M1282.25 169.3V217.2M1282.75 164.3V212.0M1283.25 162.0V241.8M1283.75 171.4V234.4M1284.25 160.1V210.8M1284.75 168.3V220.2M1285.25 162.0V230.9M1285.75 159.8V225.1M1286.25 169.8V225.1M1286.75 165.2V234.7M1287.25 180.3V223.0M1287.75 157.7V211.2M1288.25 148.5V211.0M1288.75 159.4V220.5M1289.25 169.4V228.4M1289.75 163.0V233.5M1290.25 158.5V225.9M1290.75 154.6V226.9M1291.25 172.0V229.1M1291.75 157.5V225.0M1292.25 155.8V227.7M1292.75 159.8V227.7M1293.25 163.9V223.4M1293.75 165.3V227.1M1294.25 163.7V211.7M1294.75 157.8V210.2M1295.25 161.6V224.6M1295.75 161.0V214.8M1296.25 166.9V228.6M1296.75 166.9V227.2M1297.25 168.5V236.7M1297.75 160.9V219.7M1298.25 166.2V217.8M1298.75 161.6V209.0M1299.25 157.1V220.6M1299.75 168.6V219.5M1300.25 176.4V222.6M1300.75 167.8V223.8M1301.25 167.8V213.5M1301.75 169.7V218.5M1302.25 151.4V222.4M1302.75 165.8V217.3M1303.25 172.6V215.4M1303.75 162.7V246.2M1304.25 177.3V222.1M1304.75 163.7V229.6M1305.25 153.1V224.6M1305.75 169.2V217.7M1306.25 164.4V229.9M1306.75 176.4V244.8M1307.25 170.5V214.3M1307.75 166.5V219.9M1308.25 170.9V219.3M1308.75 167.2V227.3M1309.25 161.5V210.4M1309.75 151.7V219.6M1310.25 175.9V222.4M1310.75 177.7V219.3M1311.25 156.1V229.3M1311.75 163.4V219.2M1312.25 143.1V211.1M1312.75 157.9V206.4M1313.25 155.5V216.0M1313.75 165.2V222.5M1314.25 168.4V221.4M1314.75 171.5V239.3M1315.25 161.7V220.7M1315.75 172.9V213.4M1316.25 168.0V214.0M1316.75 154.6V231.9M1317.25 175.6V223.8M1317.75 163.8V229.4M1318.25 167.5V226.1M1318.75 157.7V226.1M1319.25 150.2V208.4M1319.75 162.1V221.8M1320.25 167.6V216.6M1320.75 160.2V224.2M1321.25 172.8V222.4M1321.75 170.0V227.4M1322.25 163.7V227.4M1322.75 164.4V231.0M1323.25 152.1V213.9M1323.75 172.4V228.8M1324.25 168.0V217.7M1324.75 174.7V227.3M1325.25 171.6V220.3M1325.75 156.9V229.8M1326.25 154.5V220.9M1326.75 168.0V216.7M1327.25 165.1V238.4M1327.75 160.9V221.6M1328.25 171.8V226.9M1328.75 170.8V226.9M1329.25 159.5V228.7M1329.75 158.3V228.7M1330.25 148.5V218.8M1330.75 169.5V221.9M1331.25 166.5V231.3M1331.75 176.2V235.3M1332.25 173.9V229.5M1332.75 150.1V214.8M1333.25 142.2V206.4M1333.75 143.3V217.5M1334.25 169.7V239.2M1334.75 171.0V229.2M1335.25 167.1V228.0M1335.75 141.2V217.3M1336.25 159.4V201.8M1336.75 161.7V210.4M1337.25 155.0V216.5M1337.75 144.9V224.7M1338.25 172.1V224.7M1338.75 173.7V229.7M1339.25 160.2V216.5M1339.75 147.7V238.4M1340.25 147.5V221.3M1340.75 153.1V218.8M1341.25 161.4V216.5M1341.75 169.0V226.9M1342.25 175.0V233.8M1342.75 176.8V226.0M1343.25 147.0V213.3M1343.75 164.2V223.0M1344.25 164.4V211.5M1344.75 175.0V239.5M1345.25 167.0V235.9M1345.75 167.0V226.2M1346.25 169.8V213.4M1346.75 167.4V223.0M1347.25 142.9V245.0M1347.75 175.2V245.0M1348.25 165.1V224.9M1348.75 177.2V220.4M1349.25 173.7V223.6M1349.75 171.2V222.9M1350.25 132.6V222.9M1350.75 162.5V212.2M1351.25 152.7V220.5M1351.75 152.7V224.0M1352.25 167.0V227.9M1352.75 167.3V242.5M1353.25 156.0V223.3M1353.75 169.5V229.5M1354.25 168.4V216.3M1354.75 152.9V226.9M1355.25 166.6V237.8M1355.75 168.4V218.1M1356.25 169.9V221.1M1356.75 167.0V221.1M1357.25 160.7V223.6M1357.75 158.1V223.0M1358.25 140.1V229.4M1358.75 169.4V219.8M1359.25 181.0V224.1M1359.75 161.3V210.6M1360.25 161.5V218.4M1360.75 163.6V230.7M1361.25 166.0V209.6M1361.75 169.4V218.6M1362.25 157.4V217.7M1362.75 163.0V217.6M1363.25 176.2V226.0M1363.75 170.4V228.4M1364.25 173.9V222.4M1364.75 170.5V245.7M1365.25 158.6V225.8M1365.75 160.2V218.6M1366.25 160.2V231.7M1366.75 159.7V224.7M1367.25 163.2V205.4M1367.75 165.2V206.6M1368.25 161.7V227.8M1368.75 161.1V218.9M1369.25 172.5V217.4M1369.75 156.8V213.3M1370.25 167.8V216.6M1370.75 164.5V229.2M1371.25 157.1V217.3M1371.75 154.9V216.0M1372.25 160.6V216.1M1372.75 163.3V228.1M1373.25 173.4V220.6M1373.75 165.5V223.1M1374.25 164.5V224.0M1374.75 156.4V229.5M1375.25 154.9V219.4M1375.75 168.4V222.3M1376.25 165.8V219.2M1376.75 176.8V233.6M1377.25 163.4V227.6M1377.75 168.4V226.7M1378.25 152.9V209.9M1378.75 152.2V224.2M1379.25 161.4V209.5M1379.75 166.4V217.5M1380.25 155.3V226.5M1380.75 159.8V224.0M1381.25 168.0V225.3M1381.75 158.9V219.5M1382.25 164.9V236.2M1382.75 165.2V207.0M1383.25 174.5V223.4M1383.75 155.4V233.7M1384.25 167.0V230.8M1384.75 159.2V220.2M1385.25 163.4V208.3M1385.75 163.0V223.2M1386.25 141.8V214.1M1386.75 159.4V225.6M1387.25 162.5V225.6M1387.75 168.9V221.9M1388.25 167.0V230.1M1388.75 168.1V215.1M1389.25 163.5V218.5M1389.75 154.3V222.5M1390.25 167.4V232.2M1390.75 162.0V232.2M1391.25 162.7V219.2M1391.75 162.7V224.1M1392.25 149.2V222.6M1392.75 143.7V218.5M1393.25 160.9V216.7M1393.75 149.5V232.5M1394.25 164.5V224.1M1394.75 172.4V220.5M1395.25 156.5V214.5M1395.75 160.6V207.4M1396.25 160.9V214.4M1396.75 160.5V209.6M1397.25 176.5V223.5M1397.75 176.2V224.1M1398.25 168.0V208.4M1398.75 166.8V213.3M1399.25 168.6V232.1M1399.75 165.6V222.6M1400.25 153.7V227.8M1400.75 158.6V221.5M1401.25 169.6V214.6M1401.75 171.4V216.3M1402.25 161.5V223.3M1402.75 150.4V223.3M1403.25 154.5V217.5M1403.75 176.9V214.3M1404.25 152.3V226.8M1404.75 180.9V222.4M1405.25 166.4V213.7M1405.75 151.2V217.7M1406.25 157.7V222.5M1406.75 158.0V226.1M1407.25 169.7V225.5M1407.75 165.4V228.7M1408.25 173.6V233.7M1408.75 158.1V214.4M1409.25 161.6V223.0M1409.75 167.2V221.2M1410.25 165.0V234.4M1410.75 166.4V214.1M1411.25 166.1V218.0M1411.75 167.8V231.5M1412.25 175.5V241.6M1412.75 158.4V223.9M1413.25 158.9V212.8M1413.75 158.2V204.3M1414.25 168.5V222.7M1414.75 168.9V227.7M1415.25 166.1V226.8M1415.75 177.6V224.7M1416.25 170.2V209.9M1416.75 161.6V220.2M1417.25 157.0V218.3M1417.75 163.3V238.3M1418.25 168.3V232.3M1418.75 169.4V230.2M1419.25 165.2V230.2M1419.75 151.9V216.6M1420.25 152.7V223.0M1420.75 158.2V214.0M1421.25 170.1V225.3M1421.75 165.8V238.7M1422.25 164.0V228.8M1422.75 158.1V224.0M1423.25 166.8V229.9M1423.75 165.4V216.8M1424.25 168.3V222.5M1424.75 170.6V218.5M1425.25 167.9V218.5M1425.75 175.5V236.4M1426.25 153.0V246.5M1426.75 153.0V222.0M1427.25 155.6V210.1M1427.75 150.3V226.3M1428.25 169.4V235.4M1428.75 163.6V215.8M1429.25 173.5V224.8M1429.75 159.0V224.2M1430.25 156.2V224.2M1430.75 166.1V218.3M1431.25 165.3V222.2M1431.75 163.8V208.3M1432.25 171.3V231.0M1432.75 169.3V222.7M1433.25 169.9V219.1M1433.75 164.9V224.2M1434.25 157.7V212.2M1434.75 153.4V214.9M1435.25 153.4V225.5M1435.75 167.5V231.6M1436.25 165.7V227.5M1436.75 157.2V228.5M1437.25 160.7V229.6M1437.75 163.1V211.4M1438.25 166.6V214.5M1438.75 173.8V215.8M1439.25 168.6V214.9M1439.75 167.5V229.2M1440.25 164.0V230.4M1440.75 165.7V220.6M1441.25 161.0V212.4M1441.75 161.0V210.8M1442.25 171.5V219.2M1442.75 172.3V229.2M1443.25 173.7V236.2M1443.75 135.5V228.0M1444.25 144.2V222.9M1444.75 170.0V209.6M1445.25 154.1V214.5M1445.75 168.8V245.7M1446.25 159.2V218.3M1446.75 162.0V222.1M1447.25 147.7V226.5M1447.75 147.7V214.1M1448.25 153.9V214.0M1448.75 160.6V231.9M1449.25 160.1V238.9M1449.75 173.7V229.9M1450.25 172.4V234.5M1450.75 156.3V224.1M1451.25 163.1V220.6M1451.75 162.3V222.9M1452.25 161.1V219.8M1452.75 171.0V224.0M1453.25 167.0V224.0M1453.75 155.9V224.2M1454.25 167.4V229.2M1454.75 163.4V231.8M1455.25 175.0V219.3M1455.75 140.0V225.8M1456.25 168.6V223.6M1456.75 165.2V227.5M1457.25 174.3V231.7M1457.75 170.8V218.0M1458.25 152.7V214.3M1458.75 170.2V242.6M1459.25 153.7V211.3M1459.75 171.7V219.8M1460.25 165.6V235.7M1460.75 168.5V218.8M1461.25 155.1V214.8M1461.75 165.1V218.5M1462.25 162.5V218.5M1462.75 155.9V240.5M1463.25 172.4V230.6M1463.75 162.3V230.6M1464.25 160.6V231.2M1464.75 155.2V224.2M1465.25 166.2V221.2M1465.75 163.0V215.3M1466.25 165.1V216.6M1466.75 160.9V240.2M1467.25 167.8V222.2M1467.75 173.3V219.0M1468.25 178.7V226.6M1468.75 168.8V228.4M1469.25 163.3V228.0M1469.75 173.3V225.4M1470.25 168.0V216.2M1470.75 161.7V222.9M1471.25 153.0V233.8M1471.75 177.0V226.4M1472.25 163.5V223.4M1472.75 163.4V224.0M1473.25 162.0V230.7M1473.75 162.0V222.9M1474.25 172.0V222.7M1474.75 174.6V216.4M1475.25 150.8V218.1M1475.75 167.8V237.5M1476.25 149.3V237.5M1476.75 149.3V230.4M1477.25 159.8V223.1M1477.75 176.8V225.0M1478.25 169.9V235.2M1478.75 165.2V219.6M1479.25 155.0V215.0M1479.75 159.9V218.3M1480.25 159.9V220.9M1480.75 173.2V218.6M1481.25 167.5V231.4M1481.75 168.6V225.6M1482.25 160.3V226.5M1482.75 165.6V216.6M1483.25 142.7V230.5M1483.75 154.4V227.8M1484.25 171.7V226.9M1484.75 165.4V231.8M1485.25 168.9V223.2M1485.75 172.5V226.9M1486.25 165.9V211.2M1486.75 159.1V221.4M1487.25 160.0V225.6M1487.75 162.9V222.1M1488.25 157.6V224.3M1488.75 168.1V231.0M1489.25 163.1V235.7M1489.75 145.3V236.2M1490.25 145.3V214.2M1490.75 159.1V217.0M1491.25 172.5V221.2M1491.75 159.9V217.2M1492.25 164.7V209.7M1492.75 170.3V243.9M1493.25 159.9V213.0M1493.75 140.5V222.3M1494.25 157.7V233.7M1494.75 165.3V233.5M1495.25 167.5V228.1M1495.75 158.9V226.7M1496.25 158.9V214.3M1496.75 167.4V223.6M1497.25 168.7V219.4M1497.75 172.9V222.9M1498.25 159.8V234.6M1498.75 171.3V238.5M1499.25 172.6V212.8M1499.75 162.5V219.8M1500.25 153.6V212.8M1500.75 155.4V214.7M1501.25 155.1V213.6M1501.75 160.4V215.9M1502.25 153.5V225.5M1502.75 173.3V216.4M1503.25 171.0V215.6M1503.75 162.5V221.3M1504.25 153.4V206.6M1504.75 155.5V221.4M1505.25 166.5V216.6M1505.75 166.0V227.1M1506.25 169.2V230.7M1506.75 158.0V218.4M1507.25 158.4V217.5M1507.75 171.9V222.9M1508.25 162.7V221.8M1508.75 172.3V218.1M1509.25 172.6V222.8M1509.75 162.8V221.2M1510.25 169.2V227.1M1510.75 159.6V213.9M1511.25 162.2V215.8M1511.75 164.2V212.3M1512.25 174.8V219.9M1512.75 172.6V220.7M1513.25 167.1V222.2M1513.75 164.9V224.3M1514.25 165.9V220.9M1514.75 157.2V213.4M1515.25 164.1V222.9M1515.75 149.8V221.7M1516.25 170.7V232.1M1516.75 167.7V229.4M1517.25 177.8V229.4M1517.75 162.4V238.6M1518.25 155.4V217.2M1518.75 155.4V218.6M1519.25 162.6V223.2M1519.75 173.3V232.3M1520.25 162.0V243.2M1520.75 158.0V218.1M1521.25 147.8V215.7M1521.75 141.6V201.1M1522.25 164.5V216.3M1522.75 166.8V221.3M1523.25 179.8V229.9M1523.75 179.8V238.9" stroke="#d64e38" stroke-width="1.2" fill="none"/>
  <rect x="131" y="192" width="1393" height="2" fill="#000"/>
  <g fill="#000">
    <rect x="130" y="121" width="1395" height="2"/>
    <rect x="130" y="262" width="1395" height="2"/>
    <rect x="130" y="121" width="2" height="143"/>
    <rect x="1524" y="121" width="1" height="143"/>
  </g>
  <g font-size="18" fill="#444" text-anchor="end">
    <text x="126" y="129">15</text>
    <text x="126" y="164">7.5</text>
    <text x="126" y="199">0</text>
    <text x="126" y="234">−7.5</text>
    <text x="126" y="269">−15</text>
  </g>
  <g font-size="18" fill="#444" text-anchor="middle">
    <text x="131.5" y="285.8">0</text>
    <text x="479.5" y="285.8">1</text>
    <text x="827.8" y="285.8">2</text>
    <text x="1176" y="285.8">3</text>
    <text x="1524" y="285.8">4</text>
  </g>
  <text x="828" y="314.8" font-size="22" font-weight="bold" text-anchor="middle" textLength="77.5" lengthAdjust="spacingAndGlyphs">time (s)</text>
  <text transform="translate(75.1 192.8) rotate(-90)" font-size="22" font-weight="bold" text-anchor="middle" textLength="58.4" lengthAdjust="spacingAndGlyphs">y (EU)</text>

  <!-- plot 2 -->
  <rect x="131" y="332" width="1393" height="256" fill="#fff"/>
  <g fill="#ececec">
    <rect x="132" y="363" width="1392" height="2"/>
    <rect x="132" y="395" width="1392" height="2"/>
    <rect x="132" y="427" width="1392" height="2"/>
    <rect x="132" y="459" width="1392" height="2"/>
    <rect x="132" y="491" width="1392" height="2"/>
    <rect x="132" y="523" width="1392" height="2"/>
    <rect x="132" y="555" width="1392" height="2"/>
  </g>
  <path d="M131.7 522.6 150.9 521.6 168.5 527.0 184.6 518.6 199.5 510.2 213.5 539.2 226.5 513.6 238.7 524.8 250.2 527.7 261.1 519.7 271.5 527.3 281.3 524.7 290.7 535.7 299.7 518.6 308.2 524.7 316.5 519.1 324.4 524.7 332.0 506.5 339.3 514.3 346.4 524.5 353.2 523.4 359.8 522.2 366.2 511.5 372.4 513.0 378.5 525.3 384.3 520.4 390.0 520.4 395.5 514.1 400.9 519.7 406.1 514.3 411.2 529.1 416.2 531.3 421.1 524.7 425.8 528.0 430.5 524.8 435.0 523.8 439.4 514.8 443.8 522.4 448.0 541.8 452.2 548.4 456.2 521.9 460.2 520.9 464.1 511.8 468.0 519.4 471.8 528.5 475.5 523.5 479.1 526.0 482.7 520.9 486.2 517.6 489.6 527.5 493.0 524.5 496.3 518.6 499.6 532.1 502.8 533.6 506.0 535.7 509.1 525.5 512.2 528.0 515.2 525.3 518.2 530.1 521.2 522.4 524.1 521.4 526.9 537.2 529.8 520.6 532.5 520.4 535.3 537.2 538.0 525.0 540.7 537.5 543.3 519.4 545.9 516.3 548.5 520.4 551.0 512.3 553.5 529.1 556.0 524.5 558.4 523.5 560.8 518.4 563.2 523.3 565.6 521.9 567.9 518.4 570.2 516.9 572.5 534.1 574.8 523.0 577.0 522.6 579.2 527.0 581.4 539.2 583.5 518.4 585.7 519.9 587.8 538.9 589.9 516.9 591.9 532.1 594.0 525.0 596.0 437.1 598.0 521.7 600.0 529.1 602.0 528.4 603.9 531.6 605.8 513.6 607.7 517.9 609.6 519.9 611.5 520.7 613.4 536.1 615.2 520.9 617.0 517.9 618.9 534.0 620.6 530.8 622.4 520.9 624.2 522.3 625.9 541.7 627.7 517.7 629.4 522.8 631.1 528.7 632.8 521.5 634.4 514.1 636.1 514.6 637.7 524.9 639.4 518.3 641.0 515.8 642.6 521.6 644.2 531.7 645.8 525.3 647.3 521.8 648.9 525.3 650.4 521.8 652.0 525.4 653.5 521.9 655.0 543.4 656.5 518.5 658.0 520.1 659.5 516.9 660.9 523.0 662.4 517.9 663.8 520.2 665.3 512.0 666.7 553.8 668.1 506.4 669.5 523.6 670.9 526.5 672.3 525.6 673.7 514.2 675.1 541.7 676.4 519.1 677.8 514.1" stroke="#3a38d9" stroke-width="2" fill="none" stroke-linejoin="round"/>
  <path d="M677.8 514.1 679.1 534.9 680.4 522.8 681.8 520.4 683.1 545.9 684.4 525.5 685.7 517.0 687.0 520.4 688.2 518.6 689.5 535.8 690.8 524.2 692.0 526.1 693.3 531.4 694.5 522.9 695.8 537.7 697.0 527.0 698.2 524.1 699.4 511.8 700.6 519.4 701.8 516.5 703.0 538.8 704.2 527.3 705.4 526.7 706.5 518.7 707.7 521.2 708.8 526.9 710.0 511.3 711.1 525.3 712.3 507.4 713.4 526.6 714.5 516.0 715.6 511.4 716.8 527.7 717.9 517.5 719.0 519.8 720.0 533.0 721.1 514.6 722.2 524.4 723.3 518.3 724.4 521.3 725.4 520.1 726.5 535.8 727.5 520.6 728.6 522.5 729.6 526.1 730.7 537.7 731.7 525.1 732.7 516.0 733.7 548.2 734.8 526.8 735.8 526.1 736.8 515.6 737.8 517.9 738.8 527.3 739.8 526.3 740.7 513.7 741.7 515.0 742.7 527.6 743.7 516.2 744.6 530.4 745.6 516.8 746.6 518.6 747.5 519.6 748.5 517.9 749.4 523.8 750.4 519.2 751.3 514.0 752.2 524.9 753.1 526.0 754.1 516.6 755.0 520.9 755.9 527.4 756.8 520.7 757.7 544.9 758.6 529.4 759.5 540.7 760.4 521.0 761.3 516.7 762.2 530.6 763.1 540.4 764.0 521.2 764.8 526.0 765.7 515.2 766.6 516.4 767.4 518.3 768.3 521.7 769.1 534.3 770.0 525.0 770.8 510.9 771.7 534.9 772.5 529.5 773.4 507.6 774.2 533.3 775.0 519.8 775.9 525.1 776.7 516.1 777.5 531.6 778.3 519.2 779.1 526.8 780.0 516.9 780.8 511.3 781.6 527.5 782.4 526.1 783.2 534.8 784.0 506.6 784.8 528.4 785.5 527.7 786.3 516.6 787.1 518.4 787.9 513.1 788.7 519.1 789.4 519.2 790.2 519.6 791.0 511.4 791.8 526.4 792.5 525.8 793.3 526.0 794.0 513.7 794.8 511.6 795.5 525.3 796.3 520.0 797.0 518.5 797.8 523.3 798.5 540.2 799.2 517.8 800.0 511.7 800.7 527.5 801.4 512.1 802.2 525.4 802.9 517.0 803.6 517.9 804.3 538.4 805.1 521.7 805.8 516.6 806.5 518.8 807.2 524.2 807.9 527.1 808.6 513.8 809.3 517.6 810.0 512.9 810.7 519.7 811.4 514.5 812.1 513.4 812.8 518.7 813.5 520.9 814.1 517.0 814.8 523.7 815.5 544.7 816.2 523.7 816.9 514.8 817.5 528.4 818.2 519.6 818.9 536.3 819.5 514.4 820.2 527.2 820.9 517.6 821.5 512.3 822.2 531.7 822.8 521.6 823.5 520.5 824.1 528.1 824.8 517.1 825.4 525.5 826.1 523.4 826.7 534.6 827.4 527.7 828.0 513.9 828.6 520.4 829.3 535.2 829.9 533.2 830.5 512.3 831.2 512.8 831.8 523.2 832.4 521.5 833.0 518.1 833.7 534.8 834.3 518.4 834.9 524.3 835.5 522.7 836.1 521.8 836.7 513.8 837.4 514.0 838.0 515.6 838.6 524.7 839.2 518.1 839.8 534.4 840.4 529.5 841.0 516.6 841.6 506.1 842.2 533.7 842.8 518.7 843.4 514.9 843.9 527.0 844.5 528.3 845.1 518.9 845.7 531.0 846.3 529.9 846.9 543.4 847.5 527.2 848.0 514.0 848.6 517.3 849.2 520.3 849.8 523.9 850.3 534.1 850.9 524.6 851.5 541.8 852.0 522.8 852.6 513.8 853.2 518.2 853.7 518.3 854.3 519.0 854.9 516.8 855.4 509.8 856.0 526.5 856.5 524.0 857.1 508.8 857.6 526.3 858.2 523.1 858.7 519.2 859.3 537.1 859.8 526.1 860.4 519.9 860.9 519.4 861.4 535.6 862.0 513.7 862.5 514.4 863.1 518.0 863.6 528.0 864.1 534.6 864.7 514.2 865.2 526.2 865.7 511.2 866.3 515.6 866.8 529.0 867.3 524.0 867.8 532.6 868.4 510.5 868.9 521.6 869.4 526.8 869.9 520.5 870.4 522.6 870.9 519.7 871.5 523.4 872.0 532.0 872.5 513.3 873.0 520.0 873.5 514.3 874.0 527.0 874.5 517.3 875.0 529.7 875.5 517.1 876.0 519.9 876.5 519.2 877.0 519.1 877.5 525.9 878.0 515.9 878.5 533.7 879.0 527.1 879.5 519.4 880.0 518.5 880.5 527.3 881.0 526.4 881.5 510.5 882.0 531.8 882.5 520.0 883.0 517.0 883.4 518.3 883.9 548.6 884.4 517.9 884.9 520.0 885.4 530.6 885.9 517.2 886.3 511.1 886.8 512.4 887.3 521.7 887.8 523.3 888.2 518.9 888.7 534.2 889.2 522.8 889.6 517.3 890.1 510.3 890.6 516.3 891.1 521.1 891.5 523.2 892.0 534.3 892.5 526.8 892.9 517.1 893.4 545.9 893.8 517.3 894.3 514.3 894.8 521.1 895.2 513.5 895.7 526.0 896.1 524.7 896.6 520.1 897.0 519.9 897.5 519.7 897.9 537.4 898.4 525.2 898.8 524.2 899.3 530.9 899.7 525.1 900.2 518.7 900.6 515.2 901.1 512.9 901.5 527.6 902.0 523.9 902.4 528.0 902.8 526.7 903.3 529.6 903.7 525.3 904.2 527.1 904.6 523.8 905.0 530.0 905.5 519.9 905.9 525.0 906.3 523.2 906.8 528.3 907.2 514.1 907.6 530.2 908.1 527.3 908.5 531.0 908.9 523.6 909.3 520.3 909.8 521.6 910.2 535.2 910.6 512.9 911.0 521.8 911.5 520.9 911.9 518.3 912.3 517.9 912.7 523.5 913.1 517.0 913.6 514.7 914.0 513.4 914.4 510.2 914.8 523.1 915.2 520.0 915.6 522.4 916.0 532.4 916.5 529.9 916.9 524.6 917.3 519.2 917.7 525.5 918.1 516.9 918.5 520.6 918.9 527.6 919.3 527.7 919.7 516.3 920.1 522.4 920.5 523.4 920.9 512.8 921.3 513.4 921.7 515.9 922.1 527.2 922.5 519.2 922.9 523.2 923.3 515.3 923.7 526.6 924.1 523.1 924.5 523.4 924.9 513.7 925.3 512.5 925.7 522.1 926.1 520.0 926.5 526.1 926.9 517.1 927.3 510.8 927.7 515.3 928.1 545.4 928.4 523.0 928.8 517.4 929.2 525.2 929.6 513.2 930.0 526.8 930.4 526.7 930.8 528.4 931.1 518.6 931.5 523.9 931.9 526.9 932.3 521.0 932.7 521.9 933.0 519.3 933.4 517.5 933.8 522.9 934.2 522.4 934.6 525.3 934.9 527.5 935.3 531.9 935.7 523.3 936.1 525.0 936.4 520.1 936.8 521.4 937.2 515.9 937.5 520.2 937.9 536.3 938.3 525.3 938.6 525.9 939.0 528.3 939.4 530.9 939.8 530.4 940.1 515.8 940.5 518.5 940.8 524.8 941.2 521.0 941.6 520.0 941.9 523.5 942.3 515.7 942.7 510.3 943.0 517.4 943.4 527.3 943.7 516.5 944.1 523.7 944.5 519.9 944.8 525.3 945.2 514.0 945.5 522.0 945.9 525.1 946.2 541.7 946.6 528.1 947.0 518.9 947.3 516.6 947.7 523.6 948.0 529.2 948.4 523.6 948.7 531.9 949.1 507.0 949.4 515.0 949.8 516.8 950.1 523.9 950.5 521.1 950.8 524.0 951.2 535.5 951.5 540.2 951.8 523.6 952.2 525.9 952.5 519.4 952.9 522.4 953.2 527.1 953.6 520.8 953.9 519.1 954.2 521.0 954.6 528.7 954.9 531.6 955.3 523.3 955.6 534.8 955.9 535.8 956.3 517.3 956.6 512.9 957.0 520.9 957.3 509.7 957.6 521.5 958.0 511.0 958.3 513.4 958.6 552.3 959.0 519.6 959.3 509.5 959.6 513.5 960.0 510.7 960.3 531.6 960.6 535.6 961.0 524.4 961.3 528.2 961.6 531.8 961.9 524.6 962.3 524.8 962.6 519.8 962.9 512.8 963.3 510.8 963.6 521.7 963.9 513.6 964.2 520.4 964.6 512.7 964.9 522.8 965.2 524.8 965.5 518.5 965.8 518.2 966.2 523.0 966.5 520.5 966.8 520.8 967.1 523.1 967.5 521.8 967.8 519.1 968.1 529.3 968.4 514.5 968.7 535.1 969.0 516.4 969.4 522.5 969.7 517.5 970.0 529.8 970.3 525.1 970.6 524.6 970.9 529.0 971.3 520.7 971.6 518.8 971.9 519.3 972.2 515.8 972.5 522.8 972.8 525.1 973.1 517.9 973.4 517.6 973.7 528.9 974.1 524.9 974.4 522.6 974.7 517.6 975.0 511.7 975.3 522.7 975.6 538.3 975.9 528.9 976.2 522.1 976.5 520.9 976.8 518.4 977.1 527.4 977.4 526.2 977.7 511.1 978.0 526.8 978.3 529.9 978.6 526.0 978.9 521.4 979.2 526.6 979.5 516.3 979.8 529.0 980.1 520.2 980.4 531.8 980.7 522.5 981.0 518.0 981.3 520.1 981.6 518.6 981.9 516.0 982.2 528.7 982.5 518.4 982.8 519.9 983.1 519.6 983.4 515.1 983.7 522.9 984.0 516.5 984.3 518.1 984.6 538.5 984.9 527.6 985.2 522.3 985.5 533.4 985.8 527.8 986.1 529.7 986.4 513.5 986.6 523.4 986.9 517.4 987.2 528.7 987.5 528.8 987.8 521.8 988.1 514.4 988.4 510.6 988.7 528.8 989.0 516.1 989.2 513.1 989.5 536.1 989.8 529.5 990.1 524.2 990.4 529.0 990.7 518.0 991.0 523.2 991.2 524.0 991.5 525.2 991.8 518.4 992.1 538.1 992.4 530.1 992.7 529.2 992.9 516.5 993.2 504.0 993.5 551.9 993.8 523.6 994.1 510.1 994.3 538.3 994.6 513.2 994.9 507.5 995.2 534.2 995.5 519.0 995.7 529.8 996.0 520.7 996.3 549.0 996.6 523.9 996.8 518.2 997.1 513.6 997.4 509.1 997.7 514.9 997.9 516.5 998.2 524.1 998.5 512.0 998.8 522.2 999.0 520.9 999.3 514.2 999.6 518.1 999.9 518.0 1000.1 524.4 1000.4 516.7 1000.7 533.2 1000.9 512.2 1001.2 531.5 1001.5 539.7 1001.8 523.9 1002.0 532.0 1002.3 528.3 1002.6 524.0 1002.8 543.9 1003.1 519.2 1003.4 511.5 1003.6 519.4 1003.9 516.8 1004.2 526.4 1004.4 515.8 1004.7 525.1 1005.0 531.8 1005.2 511.4 1005.5 516.1 1005.8 523.1 1006.0 530.6 1006.3 517.2 1006.5 518.4 1006.8 517.5 1007.1 523.0 1007.3 532.7 1007.6 530.6 1007.9 517.0 1008.1 528.6 1008.4 518.7 1008.6 518.0 1008.9 518.9 1009.2 534.6 1009.4 516.6 1009.7 520.4 1009.9 524.4 1010.2 522.2 1010.5 527.2 1010.7 525.7 1011.0 519.9 1011.2 514.5 1011.5 528.2 1011.7 522.9 1012.0 520.5 1012.3 524.9 1012.5 512.8 1012.8 525.6 1013.0 521.2 1013.3 539.3 1013.5 528.3 1013.8 529.5 1014.0 534.6 1014.3 520.4 1014.5 513.7 1014.8 517.3 1015.1 522.1 1015.3 511.3 1015.6 523.5 1015.8 529.6 1016.1 529.3 1016.3 519.7 1016.6 533.9 1016.8 520.1 1017.1 531.4 1017.3 517.1 1017.6 527.8 1017.8 527.8 1018.1 538.9 1018.3 520.4 1018.6 523.2 1018.8 531.3 1019.1 520.1 1019.3 523.6 1019.5 516.5 1019.8 515.1 1020.0 516.0 1020.3 514.7 1020.5 516.3 1020.8 521.5 1021.0 542.1 1021.3 524.4 1021.5 531.7 1022.0 516.0 1022.2 535.2 1022.5 526.0 1022.7 514.8 1023.0 524.4 1023.2 535.2 1023.5 530.3 1023.7 519.1 1023.9 524.2 1024.2 521.6 1024.4 513.8 1024.7 521.1 1024.9 523.8 1025.1 525.9 1025.4 525.8 1025.6 523.6 1025.9 524.8 1026.1 529.3 1026.3 523.6 1026.6 517.0 1026.8 526.7 1027.1 528.0 1027.3 514.3 1027.5 534.2 1027.8 512.5 1028.0 523.2 1028.2 531.9 1028.5 511.0 1028.7 528.1 1028.9 519.1 1029.2 526.8 1029.4 510.2 1029.7 526.9 1029.9 511.5 1030.1 513.3 1030.4 525.9 1030.6 521.0 1030.8 514.8 1031.1 524.4 1031.3 519.6 1031.5 514.0 1032.0 526.6 1032.2 514.9 1032.5 529.7 1032.7 523.1 1032.9 528.9 1033.1 515.4 1033.4 520.0 1033.6 524.3 1033.8 530.2 1034.1 517.9 1034.3 516.5 1034.5 517.9 1034.8 512.9 1035.0 524.5 1035.2 528.5 1035.4 515.0 1035.7 520.4 1035.9 520.3 1036.1 520.0 1036.3 518.6 1036.6 531.7 1036.8 513.6 1037.0 520.3 1037.5 521.8 1037.7 543.8 1037.9 518.4 1038.2 519.0 1038.4 511.3 1038.6 518.2 1038.8 521.8 1039.1 527.4 1039.3 527.9 1039.5 525.7 1039.7 513.8 1039.9 521.3 1040.2 529.9 1040.4 534.8 1040.6 521.6 1040.8 525.2 1041.1 518.7 1041.3 528.3 1041.5 517.2 1041.9 516.3 1042.2 514.1 1042.4 520.8 1042.6 519.8 1042.8 532.1 1043.0 515.5 1043.3 536.5 1043.5 532.0 1043.7 523.4 1043.9 517.8 1044.1 521.9 1044.4 519.8 1044.6 525.4 1044.8 527.2 1045.0 518.7 1045.2 534.6 1045.4 520.4 1045.7 528.0 1045.9 526.5 1046.1 516.9 1046.3 521.2 1046.5 540.5 1047.0 519.9 1047.2 518.7 1047.4 525.3 1047.6 524.6 1047.8 510.8 1048.0 518.3 1048.5 527.5 1048.7 517.0 1048.9 540.2 1049.1 515.0 1049.3 522.3 1049.5 521.3 1050.0 519.4 1050.2 543.4 1050.4 514.9 1050.6 516.0 1050.8 524.6 1051.0 515.7 1051.2 524.4 1051.4 522.4 1051.6 521.1 1051.9 536.8 1052.1 525.0 1052.3 513.8 1052.5 528.6 1052.7 521.2 1052.9 516.1 1053.1 536.6 1053.3 527.4 1053.5 515.1 1053.7 527.3 1054.0 525.7 1054.2 543.9 1054.4 520.2 1054.6 535.2 1054.8 537.3 1055.0 518.6 1055.2 512.5 1055.4 522.7 1055.6 525.0 1055.8 513.5 1056.0 523.0 1056.4 526.7 1056.6 529.3 1056.8 520.3 1057.0 526.9 1057.3 517.5 1057.5 521.8 1057.7 524.0 1057.9 526.2 1058.1 527.1 1058.3 520.4 1058.5 523.3 1058.7 521.2 1058.9 521.1 1059.1 514.8 1059.3 526.9 1059.5 518.0 1059.7 514.3 1059.9 527.3 1060.1 528.3 1060.3 523.8 1060.5 538.2 1060.9 521.2 1061.1 520.3 1061.3 522.2 1061.5 532.8 1061.9 519.3 1062.1 523.9 1062.3 540.9 1062.5 511.2 1062.7 520.6 1062.9 519.5 1063.1 519.7 1063.3 509.8 1063.5 525.3 1063.9 522.1 1064.1 521.9 1064.3 516.5 1064.5 535.5 1064.7 521.2 1064.9 521.9 1065.1 540.7 1065.3 516.3 1065.5 531.5 1065.7 522.0 1065.9 523.3 1066.1 508.9 1066.3 520.5 1066.5 516.9 1066.7 522.5 1066.8 521.8 1067.0 520.9 1067.2 524.0 1067.4 516.0 1067.6 516.9 1067.8 518.4 1068.0 529.6 1068.2 521.9 1068.4 526.4 1068.6 519.0 1068.8 535.7 1069.0 510.9 1069.2 521.9 1069.4 518.3 1069.6 514.6 1069.8 511.1 1069.9 519.0 1070.1 534.7 1070.3 534.9 1070.5 534.4 1070.7 521.3 1070.9 559.1 1071.1 521.7 1071.3 527.4 1071.5 511.6 1071.7 528.5 1071.9 515.1 1072.0 523.3 1072.4 534.8 1072.6 519.9 1072.8 520.4 1073.0 519.1 1073.2 522.7 1073.4 520.5 1073.6 518.4 1073.8 512.0 1073.9 528.9 1074.1 521.6 1074.3 527.6 1074.5 521.2 1074.7 514.5 1074.9 516.5 1075.1 517.4 1075.4 530.9 1075.6 514.4 1075.8 517.0 1076.0 518.9 1076.2 513.3 1076.4 521.5 1076.6 504.8 1076.8 525.7 1076.9 523.6 1077.1 517.9 1077.3 515.9 1077.5 520.2 1077.7 514.2 1077.9 513.1 1078.0 526.3 1078.2 514.8 1078.4 523.5 1078.6 531.2 1079.0 525.6 1079.2 516.0 1079.3 506.5 1079.5 516.5 1079.7 528.9 1079.9 520.7 1080.1 517.4 1080.3 513.9 1080.4 518.9 1080.6 520.6 1081.0 528.2 1081.2 518.9 1081.3 518.3 1081.5 517.7 1081.7 536.7 1081.9 519.1 1082.1 536.2 1082.2 516.8 1082.4 522.4 1082.6 521.6 1082.8 534.3 1083.0 520.7 1083.2 516.9 1083.3 521.3 1083.5 526.5 1083.9 515.2 1084.1 517.6 1084.4 509.5 1084.6 525.8 1084.9 514.0 1085.1 520.0 1085.3 529.7 1085.5 522.2 1085.7 524.4 1085.8 518.0 1086.0 521.0 1086.2 527.8 1086.4 525.4 1086.5 517.9 1086.7 523.2 1086.9 518.0 1087.1 526.0 1087.3 518.5 1087.4 525.7 1087.6 519.5 1088.0 528.0 1088.1 526.7 1088.5 514.5 1088.7 527.7 1088.8 516.1 1089.0 510.9 1089.2 527.7 1089.4 514.6 1089.5 519.1 1089.7 510.3 1089.9 520.6 1090.1 516.9 1090.2 540.0 1090.4 525.7 1090.6 535.0 1090.9 511.4 1091.1 520.1 1091.3 516.3 1091.4 524.9 1091.6 522.9 1091.8 517.3 1092.0 522.1 1092.1 512.4 1092.3 530.7 1092.5 514.4 1092.6 515.5 1093.0 525.0 1093.2 543.5 1093.3 512.2 1093.5 537.0 1093.7 519.4 1093.8 519.8 1094.0 513.0 1094.4 524.0 1094.5 521.5 1094.7 526.4 1094.9 515.4 1095.0 519.7 1095.2 525.5 1095.4 520.6 1095.5 513.8 1095.7 512.8 1095.9 521.6 1096.1 522.8 1096.2 531.3 1096.4 513.7 1096.6 517.7 1096.7 528.1 1096.9 524.1 1097.1 523.8 1097.2 531.2 1097.4 526.3 1097.6 524.6 1097.7 528.3 1097.9 520.6 1098.1 518.4 1098.2 514.4 1098.4 521.5 1098.6 527.0 1098.7 514.7 1098.9 525.6 1099.1 532.5 1099.2 511.3 1099.4 517.2 1099.6 530.0 1099.7 517.4 1099.9 528.8 1100.1 525.2 1100.4 511.9 1100.6 524.7 1100.7 529.1 1100.9 527.3 1101.1 516.1 1101.2 522.7 1101.4 516.3 1101.6 521.0 1101.7 529.0 1101.9 517.2 1102.0 525.3 1102.4 528.0 1102.5 523.5 1102.7 510.4 1102.9 513.4 1103.0 537.6 1103.2 518.4 1103.4 521.0 1103.5 526.7 1103.7 512.2 1103.8 523.2 1104.0 521.5 1104.3 525.3 1104.5 510.8 1104.6 546.1 1104.8 519.0 1105.0 524.1 1105.1 523.8 1105.5 519.9 1105.6 514.2 1105.8 510.7 1105.9 517.9 1106.1 523.0 1106.3 542.8 1106.4 531.1 1106.6 516.2 1106.7 537.9 1106.9 519.3 1107.1 517.7 1107.2 522.6 1107.4 515.6 1107.5 520.7 1107.7 518.6 1107.9 522.9 1108.0 522.7 1108.3 515.2 1108.5 530.7 1108.7 514.0 1108.8 533.3 1109.0 530.6 1109.1 523.7 1109.3 526.8 1109.4 523.6 1109.6 525.1 1109.8 519.3 1109.9 523.0 1110.1 538.3 1110.4 520.3 1110.5 529.8 1110.9 512.2 1111.0 518.9 1111.3 532.6 1111.5 518.2 1111.6 521.9 1112.0 507.7 1112.1 522.7 1112.3 515.5 1112.4 517.6 1112.6 518.5 1112.9 533.5 1113.0 523.4 1113.2 525.2 1113.4 521.2 1113.5 528.6 1113.7 512.1 1114.0 518.4 1114.1 531.2 1114.4 505.7 1114.6 516.4 1114.7 527.9 1114.9 525.2 1115.1 515.5 1115.2 527.5 1115.4 516.9 1115.5 529.6 1116.0 517.4 1116.1 519.8 1116.4 524.5 1116.6 545.3 1116.7 515.3 1116.9 530.2 1117.0 527.4 1117.3 515.3 1117.5 518.6 1117.8 523.5 1118.0 513.7 1118.1 510.7 1118.3 524.0 1118.4 519.6 1118.6 531.6 1118.9 517.3 1119.0 520.4 1119.2 532.8 1119.5 525.5 1119.6 511.8 1119.8 518.3 1119.9 516.1 1120.1 517.3 1120.2 513.0 1120.4 518.9 1120.5 512.4 1120.8 533.7 1121.0 522.6 1121.1 512.6 1121.3 529.3 1121.4 515.3 1121.6 522.6 1121.7 525.8 1121.9 522.1 1122.0 519.9 1122.2 509.5 1122.5 517.2 1122.6 508.2 1122.9 523.1 1123.0 527.8 1123.3 529.2 1123.5 511.0 1123.6 513.1 1123.9 517.9 1124.1 531.4 1124.2 520.0 1124.4 528.7 1124.5 509.0 1124.7 536.2 1125.0 515.1 1125.1 532.2 1125.4 513.0 1125.5 541.7 1125.8 514.6 1126.0 531.2 1126.1 519.8 1126.4 528.3 1126.6 526.4 1126.8 516.4 1127.0 524.6 1127.1 517.2 1127.3 522.8 1127.4 521.9 1127.6 518.6 1127.9 510.5 1128.0 512.7 1128.3 518.4 1128.4 515.1 1128.6 515.2 1128.7 520.2 1128.9 514.8 1129.0 530.8 1129.3 508.1 1129.4 525.6 1129.6 518.3 1129.7 518.3 1129.9 530.2 1130.0 519.6 1130.4 522.3 1130.6 533.0 1130.7 513.4 1130.9 525.6 1131.0 525.4 1131.4 516.9 1131.6 522.7 1131.9 513.2 1132.0 517.5 1132.1 516.1 1132.3 513.2 1132.4 521.4 1132.6 525.9 1133.0 517.1 1133.1 514.9 1133.3 528.0 1133.4 522.5 1133.5 519.4 1133.7 530.6 1134.0 513.0 1134.1 522.5 1134.4 532.9 1134.5 515.8 1134.7 528.1 1134.9 521.8 1135.1 526.2 1135.4 514.9 1135.5 522.2 1135.6 520.2 1135.8 532.8 1135.9 524.4 1136.1 525.0 1136.2 511.0 1136.5 521.9 1136.6 518.4 1136.7 512.8 1136.9 515.7 1137.0 528.9 1137.2 522.0 1137.3 531.2 1137.4 522.6 1137.6 523.0 1137.8 533.0 1138.0 523.5 1138.1 526.4 1138.4 506.0 1138.5 535.2 1138.9 514.7 1139.1 522.1 1139.2 516.2 1139.5 527.0 1139.6 520.2 1139.8 508.3 1139.9 515.1 1140.0 515.0 1140.4 533.6 1140.6 523.6 1140.7 525.1 1140.8 521.7 1141.0 523.2 1141.1 516.2 1141.4 526.3 1141.5 526.9 1141.7 518.1 1141.9 519.0 1142.1 529.0 1142.5 516.6 1142.6 519.6 1142.7 512.6 1143.0 529.0 1143.1 518.3 1143.3 520.6 1143.4 512.3 1143.5 520.8 1143.8 509.9 1143.9 522.0 1144.1 513.5 1144.3 526.7 1144.5 512.5 1144.6 522.3 1144.7 544.0 1145.0 513.3 1145.1 512.3 1145.3 525.8 1145.4 525.0 1145.5 523.9 1145.8 532.1 1145.9 522.8 1146.1 521.3 1146.2 512.7 1146.3 532.6 1146.4 521.3 1146.6 537.3 1146.7 518.0 1147.0 524.8 1147.1 518.6 1147.2 538.3 1147.5 516.2 1147.6 516.7 1147.8 537.6 1147.9 524.4 1148.0 524.3 1148.1 529.6 1148.3 521.1 1148.4 522.6 1148.5 514.9 1148.9 527.9 1149.1 514.9 1149.3 532.5 1149.5 512.4 1149.6 514.3 1149.8 535.1 1150.0 528.8 1150.1 529.9 1150.5 518.5 1150.6 514.8 1151.0 511.4 1151.1 527.5 1151.3 528.9 1151.4 523.4 1151.5 538.9 1151.8 523.5 1151.9 534.5 1152.0 516.6 1152.4 531.3 1152.5 514.9 1152.7 531.8 1152.9 525.0 1153.0 530.6 1153.2 531.1 1153.3 515.4 1153.4 528.9 1153.6 520.4 1153.9 547.9 1154.1 535.0 1154.4 514.7 1154.6 516.3 1154.8 538.0 1154.9 512.7 1155.1 529.4 1155.3 514.0 1155.5 517.9 1155.6 521.4 1155.7 509.3 1156.0 531.4 1156.1 537.7 1156.2 518.7 1156.5 520.4 1156.6 519.0 1156.7 526.6 1157.0 515.0 1157.1 518.7 1157.3 513.2 1157.5 519.7 1157.6 515.1 1158.0 523.9 1158.1 523.0 1158.3 519.3 1158.4 528.0 1158.6 533.1 1158.8 513.2 1158.9 525.7 1159.1 514.5 1159.4 536.9 1159.6 521.7 1159.8 520.9 1159.9 528.2 1160.1 534.6 1160.2 512.6 1160.4 522.4 1160.5 511.9 1160.9 526.0 1161.0 520.9 1161.2 513.9 1161.4 527.1 1161.5 515.2 1161.8 528.3 1161.9 518.5 1162.0 519.9 1162.3 515.8 1162.5 548.1 1162.6 536.7 1163.0 514.1 1163.1 516.5 1163.2 533.5 1163.5 524.4 1163.6 531.2 1163.8 513.3 1163.9 529.3 1164.1 533.8 1164.3 518.3 1164.4 525.1 1164.6 518.7 1164.7 522.2 1164.8 516.4 1164.9 521.9 1165.0 517.9 1165.3 514.1 1165.4 518.3 1165.5 529.5 1165.7 515.0 1165.9 530.2 1166.0 522.8 1166.1 537.0 1166.5 511.1 1166.6 512.3 1166.7 524.8 1166.9 505.9 1167.1 525.8 1167.2 526.4 1167.3 513.2 1167.4 523.0 1167.5 529.1 1167.7 512.7 1167.8 532.6 1167.9 521.2 1168.0 522.4 1168.2 533.8 1168.4 520.7 1168.5 531.2 1168.6 514.5 1168.7 535.7 1169.0 511.9 1169.1 516.7 1169.2 515.8 1169.3 529.6 1169.4 520.4 1169.5 514.9 1169.7 525.2 1169.8 507.9 1169.9 515.2 1170.0 516.1 1170.1 511.2 1170.5 522.7 1170.6 519.5 1170.9 530.6 1171.1 520.8 1171.2 527.0 1171.3 517.6 1171.4 518.7 1171.5 522.3 1171.8 534.1 1172.0 525.4 1172.1 518.9 1172.3 508.2 1172.5 536.0 1172.6 523.2 1172.8 515.3 1172.9 525.3 1173.0 524.3 1173.4 529.5 1173.5 517.5 1173.6 516.9 1173.7 513.4 1173.9 523.3 1174.1 523.4 1174.2 530.9 1174.4 524.7 1174.5 528.7 1174.9 512.6 1175.0 523.3 1175.1 519.5 1175.2 525.3 1175.4 514.2 1175.5 519.6 1175.7 537.8 1175.9 513.5 1176.0 521.8 1176.2 544.4 1176.5 537.9 1176.6 517.0 1176.8 523.9 1176.9 515.5 1177.0 514.8 1177.4 533.2 1177.5 518.9 1177.6 531.8 1177.7 535.7 1177.9 512.6 1178.0 520.4 1178.3 515.1 1178.5 529.9 1178.6 518.3 1178.8 518.0 1178.9 530.2 1179.0 531.6 1179.2 512.1 1179.5 526.3 1179.6 524.3 1179.9 516.4 1180.1 519.4 1180.5 534.5 1180.6 520.7 1180.8 511.5 1180.9 527.5 1181.1 530.7 1181.3 521.7 1181.5 525.1 1181.6 508.8 1181.8 527.5 1181.9 515.9 1182.0 514.7 1182.2 534.4 1182.5 528.2 1182.6 520.6 1182.7 507.1 1182.9 529.1 1183.0 528.1 1183.1 511.0 1183.5 520.8 1183.6 524.4 1183.7 514.9 1183.9 532.6 1184.0 520.4 1184.1 523.4 1184.5 510.3 1184.6 509.5 1184.8 535.3 1184.9 515.7 1185.0 531.6 1185.4 517.4 1185.5 529.4 1185.9 531.1 1186.0 514.4 1186.1 519.3 1186.2 523.2 1186.3 511.0 1186.4 516.8 1186.5 531.1 1186.8 511.5 1186.9 519.4 1187.1 531.1 1187.2 533.8 1187.5 514.6 1187.6 516.3 1187.9 543.6 1188.0 526.8 1188.2 538.4 1188.4 512.6 1188.6 521.6 1188.7 513.7 1188.8 523.0 1189.0 517.5 1189.1 524.1 1189.2 528.0 1189.4 518.9 1189.5 518.9 1189.8 521.6 1189.9 511.9 1190.0 537.0 1190.1 540.2 1190.5 521.2 1190.6 530.5 1190.9 531.2 1191.0 525.3 1191.1 526.2 1191.3 511.4 1191.4 514.8 1191.5 529.7 1191.8 518.0 1191.9 530.1 1192.0 522.7 1192.5 510.1 1192.6 534.5 1192.9 511.2 1193.0 517.5 1193.1 526.9 1193.2 543.2 1193.4 522.2 1193.5 513.8 1193.9 535.7 1194.0 535.4 1194.1 525.5 1194.3 535.4 1194.4 530.5 1194.5 525.5 1194.9 534.2 1195.0 522.7 1195.1 509.9 1195.3 547.2 1195.5 529.3 1195.6 519.1 1195.8 517.0 1195.9 522.3 1196.0 518.2 1196.1 516.3 1196.2 513.0 1196.4 529.6 1196.5 528.8 1196.6 515.2 1196.9 539.7 1197.0 520.8 1197.2 515.3 1197.4 520.1 1197.5 530.1 1197.9 514.4 1198.0 524.2 1198.1 512.8 1198.4 526.2 1198.6 518.8 1198.7 529.2 1198.9 514.9 1199.0 523.4 1199.1 515.4 1199.4 536.5 1199.5 524.9 1199.6 532.7 1199.9 521.4 1200.0 534.4 1200.1 518.0 1200.2 530.8 1200.4 515.3 1200.5 530.2 1200.6 514.7 1200.7 529.4 1200.9 514.2 1201.0 526.0 1201.1 515.4 1201.2 514.3 1201.4 528.1 1201.5 514.3 1201.6 525.9 1201.7 535.8 1201.9 519.9 1202.0 524.2 1202.1 521.2 1202.4 512.2 1202.5 529.6 1202.6 519.5 1202.8 512.2 1203.0 525.5 1203.1 513.6 1203.4 532.7 1203.5 531.2 1203.6 525.4 1203.7 527.9 1204.0 511.7 1204.1 539.0 1204.2 514.6 1204.5 521.4 1204.6 512.6 1204.9 532.9 1205.0 513.0 1205.3 526.2 1205.4 522.9 1205.5 527.0 1205.6 517.3 1205.9 519.0 1206.0 513.0 1206.1 511.3 1206.3 536.1 1206.4 527.3 1206.5 525.5 1206.6 511.2 1206.9 526.2 1207.0 521.0 1207.3 508.5 1207.4 529.0 1207.5 520.6 1207.6 518.7 1207.7 513.5 1208.0 523.1 1208.1 512.9 1208.2 525.8 1208.5 516.2 1208.6 521.5 1208.8 516.0 1208.8 534.6 1208.9 528.7 1209.0 518.3 1209.4 528.6 1209.5 524.9 1209.7 531.9 1209.8 521.7 1209.9 525.0 1210.0 529.8 1210.3 511.5 1210.5 532.8 1210.6 519.2 1210.8 533.0 1211.0 515.3 1211.1 523.0 1211.2 524.1 1211.3 513.4 1211.4 518.6 1211.5 524.2 1211.7 531.6 1211.9 519.2 1212.0 532.5 1212.2 536.9 1212.5 521.2 1212.6 518.5 1212.9 526.2 1213.0 521.4 1213.1 522.0 1213.1 518.9 1213.3 541.7 1213.4 538.0 1213.5 547.4 1213.9 521.9 1214.0 525.1 1214.1 529.5 1214.2 523.0 1214.5 523.4 1214.6 519.5 1214.7 526.6 1214.9 509.3 1215.0 529.5 1215.4 517.5 1215.5 517.9 1215.6 517.9 1215.8 531.3 1216.0 529.1 1216.1 525.3 1216.1 528.3 1216.3 516.0 1216.4 520.8 1216.5 515.6 1216.6 528.9 1217.0 518.3 1217.1 523.5 1217.3 530.8 1217.4 522.3 1217.4 523.6 1217.5 530.9 1217.6 531.9 1217.8 517.2 1218.0 523.2 1218.1 534.4 1218.5 523.2 1218.6 514.1 1218.6 529.4 1218.8 512.1 1218.9 516.7 1219.0 520.6 1219.1 532.2 1219.5 519.8 1219.6 521.8 1219.7 519.5 1219.7 527.5 1219.9 523.5 1220.0 522.2 1220.2 515.6 1220.3 532.4 1220.5 524.6 1220.6 518.8 1220.7 538.3 1220.9 511.4 1221.0 528.7 1221.3 534.8 1221.4 516.7 1221.5 525.9 1221.6 519.9 1221.7 524.7 1221.9 507.0 1222.0 513.3 1222.2 529.7 1222.5 520.3 1222.6 520.2 1222.6 507.9 1222.7 525.5 1222.9 524.8 1223.0 512.5 1223.2 504.8 1223.3 529.5 1223.5 518.0 1223.5 526.1 1223.6 539.7 1223.7 512.2 1224.0 516.9 1224.1 517.1 1224.3 537.1 1224.4 516.1 1224.5 517.3 1224.9 516.7 1225.0 527.3 1225.1 521.4 1225.2 522.6 1225.2 508.6 1225.4 516.9 1225.5 520.3 1225.6 511.7 1226.0 530.3 1226.0 509.1 1226.2 523.9 1226.5 520.7 1226.6 525.2 1226.7 510.4 1226.9 517.9 1227.0 525.2 1227.5 513.0 1227.5 532.8 1227.7 515.2 1227.8 537.1 1228.0 523.4 1228.1 520.7 1228.3 527.0 1228.4 517.0 1228.5 537.6 1229.0 514.3 1229.0 530.8 1229.2 533.8 1229.3 512.7 1229.5 524.7 1229.6 516.9 1229.8 537.9 1230.0 513.9 1230.1 509.3 1230.3 531.0 1230.4 527.1 1230.5 524.5 1230.6 538.8 1230.9 517.5 1231.0 521.0 1231.3 539.9 1231.4 512.2 1231.5 519.5 1231.6 528.6 1231.7 533.6 1231.8 510.4 1232.0 514.5 1232.1 525.0 1232.2 510.3 1232.4 523.2 1232.5 516.7 1232.7 515.5 1232.8 529.7 1232.9 518.1 1233.0 518.7 1233.3 507.4 1233.4 531.5 1233.4 515.3 1233.5 529.0 1233.9 511.7 1234.0 541.0 1234.0 533.9 1234.1 515.7 1234.5 527.4 1234.6 524.7 1234.9 511.3 1235.0 529.7 1235.1 519.4 1235.1 509.8 1235.2 533.0 1235.5 520.8 1235.6 519.6 1235.7 512.3 1235.9 546.4 1236.0 523.6 1236.1 536.6 1236.2 539.1 1236.4 515.6 1236.5 527.1 1236.6 520.6 1236.8 512.7 1236.9 518.9 1237.0 543.5 1237.1 516.9 1237.4 522.0 1237.5 521.8 1237.8 512.8 1237.9 535.7 1238.0 532.0 1238.1 512.6 1238.4 512.7 1238.5 528.8 1238.6 542.2 1238.8 517.9 1238.9 540.7 1239.0 517.6 1239.1 526.3 1239.4 524.6 1239.5 515.9 1239.9 528.8 1240.0 518.3 1240.1 518.2 1240.3 531.7 1240.4 517.3 1240.5 520.1 1240.6 518.1 1240.8 543.0 1241.0 520.6 1241.1 530.9 1241.2 535.2 1241.2 515.3 1241.5 532.1 1241.6 509.0 1241.8 527.4 1242.0 523.1 1242.1 516.1 1242.3 528.7 1242.4 506.8 1242.5 515.0 1242.5 513.2 1242.6 512.2 1242.7 534.4 1243.0 516.3 1243.0 511.9 1243.4 529.8 1243.5 530.1 1243.6 521.7 1243.8 551.1 1243.9 528.2 1244.0 512.6 1244.5 530.6 1244.6 522.7 1244.8 533.6 1244.9 516.9 1245.0 521.7 1245.1 530.8 1245.3 517.1 1245.5 521.2 1245.5 543.4 1245.9 508.5 1245.9 520.7 1246.0 518.4 1246.3 508.1 1246.3 530.6 1246.4 524.5 1246.5 523.0 1246.7 531.3 1246.8 513.0 1247.0 516.8 1247.1 528.9 1247.1 536.5 1247.3 519.9 1247.5 520.7 1247.5 524.9 1247.6 504.3 1247.8 532.3 1247.9 531.7 1248.0 550.2 1248.2 508.3 1248.4 525.6 1248.5 515.1 1248.7 535.5 1249.0 521.3 1249.1 537.0 1249.5 518.0 1249.5 520.1 1249.6 530.7 1249.9 509.1 1250.0 513.6 1250.4 524.9 1250.5 510.4 1250.6 522.4 1250.7 515.7 1250.9 528.3 1251.0 528.2 1251.2 514.5 1251.5 542.9 1251.6 525.1 1251.6 512.7 1251.7 535.2 1252.0 526.2 1252.0 523.9 1252.3 511.2 1252.4 523.8 1252.5 520.5 1252.7 511.9 1252.7 532.2 1253.0 524.1 1253.0 520.6 1253.2 509.7 1253.3 531.2 1253.4 520.0 1253.5 523.8 1253.7 509.8 1254.0 541.8 1254.1 530.1 1254.2 513.6 1254.4 520.8 1254.5 519.1 1254.7 534.9 1254.7 515.6 1255.0 521.5 1255.1 525.1 1255.3 533.2 1255.4 511.4 1255.4 514.6 1255.5 513.5 1255.7 509.8 1256.0 526.3 1256.1 521.8 1256.4 509.8 1256.4 537.6 1256.5 517.9 1256.7 531.4 1256.9 513.5 1257.0 514.8 1257.0 526.3 1257.2 528.1 1257.4 516.4 1257.5 524.9 1257.6 531.7 1257.7 503.0 1258.0 518.2 1258.0 528.5 1258.3 512.5 1258.4 538.2 1258.5 527.0 1258.6 531.1 1258.7 514.0 1258.9 523.9 1259.0 530.1 1259.2 516.1 1259.5 519.6 1259.5 525.7 1259.6 511.8 1260.0 512.7 1260.1 524.7 1260.1 516.7 1260.4 527.3 1260.4 519.2 1260.5 523.9 1260.6 536.0 1260.7 521.3 1261.0 525.1 1261.0 534.0 1261.1 535.5 1261.3 517.4 1261.5 517.6 1261.6 521.0 1261.8 535.6 1261.9 517.3 1262.0 522.4 1262.1 513.8 1262.1 529.2 1262.4 516.0 1262.5 515.0 1263.0 546.5 1263.0 515.2 1263.2 510.5 1263.5 537.9 1263.5 548.3 1264.0 516.8 1264.1 525.2 1264.4 516.9 1264.4 533.3 1264.5 526.0 1264.6 515.0 1264.7 533.3 1264.9 528.5 1265.0 513.4 1265.1 513.1 1265.2 537.2 1265.5 532.8 1265.5 516.0 1265.7 513.7 1266.0 540.7 1266.0 528.4 1266.2 535.3 1266.3 516.3 1266.5 529.4 1266.5 516.4 1266.6 513.2 1266.8 526.8 1267.0 519.8 1267.0 513.4 1267.3 534.6 1267.5 512.2 1267.6 522.4 1267.7 535.9 1267.8 515.8 1268.0 532.8 1268.1 522.6 1268.1 526.4 1268.5 511.2 1268.6 508.8 1269.0 532.0 1269.1 510.7 1269.4 521.5 1269.5 520.8 1269.6 523.3 1269.7 530.4 1270.0 512.6 1270.1 525.3 1270.3 531.2 1270.4 508.2 1270.5 528.5 1270.6 522.4 1270.8 531.6 1271.0 514.0 1271.1 527.2 1271.3 536.4 1271.4 513.4 1271.5 522.5 1271.6 518.5 1271.6 529.6 1271.7 517.1 1272.0 523.9 1272.0 524.8 1272.1 534.8 1272.2 510.8 1272.5 518.6 1272.5 528.2 1272.7 536.2 1272.8 510.6 1273.0 522.7 1273.0 523.4 1273.2 525.2 1273.2 517.6 1273.5 519.4 1273.5 509.2 1273.8 536.7 1273.9 510.2 1274.0 523.8 1274.2 539.0 1274.3 509.5 1274.4 528.0 1274.5 516.0 1274.6 526.2 1275.0 524.8 1275.1 530.8 1275.2 513.7 1275.5 519.9 1275.5 522.6 1276.0 536.8 1276.0 516.7 1276.1 508.6 1276.4 528.1 1276.4 508.9 1276.5 532.2 1276.8 539.6 1277.0 514.1 1277.1 531.0 1277.3 516.2 1277.5 534.0 1277.5 527.3 1277.7 515.2 1277.9 535.5 1278.0 524.7 1278.0 526.0 1278.3 512.3 1278.4 529.5 1278.5 532.3 1278.6 538.7 1278.7 523.0 1279.0 534.0 1279.1 531.1 1279.2 509.5 1279.3 532.3 1279.5 518.9 1279.5 516.9 1279.7 535.6 1279.9 527.9 1280.0 519.0 1280.1 510.6 1280.2 529.8 1280.5 522.0 1280.5 518.8 1280.8 541.8 1280.9 515.8 1281.0 519.5 1281.0 524.1 1281.2 535.0 1281.4 512.0 1281.5 514.3 1281.6 528.5 1281.7 512.4 1281.8 534.7 1282.0 519.0 1282.0 549.5 1282.2 515.6 1282.5 523.6 1282.6 543.5 1282.7 508.6 1283.0 513.2 1283.0 526.6 1283.1 513.1 1283.4 518.3 1283.5 520.2 1283.9 507.2 1284.0 536.9 1284.0 526.1 1284.3 528.9 1284.4 513.8 1284.5 522.3 1284.6 529.6 1285.0 507.9 1285.0 515.0 1285.3 513.5 1285.4 534.8 1285.5 528.0 1285.6 517.4 1285.7 505.9 1286.0 532.5 1286.0 530.4 1286.5 517.0 1286.5 540.2 1286.7 514.5 1286.9 536.7 1287.0 517.1 1287.3 535.1 1287.3 513.7 1287.5 526.5 1287.5 513.4 1287.6 540.0 1288.0 523.1 1288.0 518.6 1288.2 506.0 1288.4 532.1 1288.5 525.3 1288.6 516.2 1289.0 527.8 1289.0 521.2 1289.2 524.8 1289.4 516.5 1289.5 522.9 1289.5 520.9 1289.7 524.9 1289.9 509.9 1290.0 515.9 1290.1 523.7 1290.1 513.8 1290.4 538.7 1290.4 521.8 1290.5 529.0 1290.7 514.5 1291.0 517.2 1291.0 537.0 1291.4 510.7 1291.5 523.3 1291.5 518.6 1291.8 540.2 1292.0 510.0 1292.0 518.5 1292.5 534.5 1292.6 532.2 1292.8 513.3 1292.9 533.3 1293.0 526.3 1293.1 534.5 1293.2 515.0 1293.5 531.4 1293.5 523.8 1293.6 515.9 1293.6 537.3 1294.0 531.8 1294.0 513.2 1294.4 539.2 1294.5 523.7 1294.5 514.6 1295.0 532.8 1295.0 519.9 1295.3 535.6 1295.5 516.5 1295.5 521.7 1295.8 513.9 1296.0 525.9 1296.0 514.7 1296.3 525.4 1296.4 507.9 1296.5 525.1 1296.5 523.8 1296.7 531.2 1296.8 508.6 1297.0 520.3 1297.0 519.1 1297.1 530.5 1297.5 515.0 1297.5 531.5 1297.6 533.6 1297.7 517.3 1298.0 525.4 1298.0 517.6 1298.3 528.8 1298.4 514.1 1298.5 517.7 1298.5 521.9 1298.6 515.7 1299.0 527.7 1299.0 525.0 1299.1 509.8 1299.3 534.2 1299.5 526.6 1299.5 529.9 1299.8 511.8 1299.9 527.2 1300.0 532.1 1300.3 534.6 1300.4 521.2 1300.5 528.9 1300.6 512.5 1300.8 550.3 1301.0 521.5 1301.0 525.3 1301.2 510.8 1301.2 537.9 1301.5 524.0 1301.5 513.1 1301.7 501.1 1301.9 532.6 1302.0 520.5 1302.0 520.1 1302.1 516.3 1302.3 528.0 1302.4 523.9 1302.5 520.6 1302.6 535.2 1303.0 512.9 1303.1 511.9 1303.1 508.2 1303.2 525.3 1303.5 521.8 1303.5 518.6 1303.7 530.4 1303.9 513.3 1304.0 521.7 1304.0 526.5 1304.2 511.0 1304.3 538.0 1304.5 523.2 1304.6 526.8 1304.6 506.2 1304.7 531.8 1305.0 522.9 1305.0 522.1 1305.2 540.2 1305.4 510.4 1305.5 521.2 1305.5 514.5 1305.9 532.8 1306.0 517.4 1306.1 528.4 1306.1 513.4 1306.4 542.0 1306.5 519.6 1306.5 518.7 1306.6 511.4 1306.9 538.3 1307.0 526.7 1307.4 530.3 1307.4 513.0 1307.5 524.5 1307.5 529.1 1307.7 512.6 1308.0 521.7 1308.0 532.1 1308.1 516.5 1308.5 517.0 1308.5 520.2 1308.8 516.5 1308.9 529.9 1309.0 516.6 1309.0 511.0 1309.4 532.6 1309.5 519.1 1309.5 529.2 1309.6 511.5 1309.8 529.8 1310.0 523.3 1310.0 517.9 1310.4 513.0 1310.5 529.1 1310.5 530.4 1310.9 515.0 1310.9 516.7 1311.0 521.0 1311.2 512.0 1311.3 537.1 1311.5 522.1 1311.5 517.8 1311.6 529.9 1311.7 515.1 1312.0 516.2 1312.0 532.6 1312.2 516.2 1312.4 524.2 1312.5 520.6 1312.7 531.5 1312.9 513.4 1313.0 523.9 1313.0 539.1 1313.4 515.8 1313.5 518.9 1313.5 506.6 1313.9 540.8 1314.0 527.3 1314.4 510.9 1314.5 516.5 1314.5 524.7 1314.9 513.7 1315.0 539.6 1315.0 527.7 1315.1 533.5 1315.5 515.1 1315.5 521.9 1315.6 511.9 1315.7 543.3 1316.0 525.4 1316.1 520.5 1316.2 527.6 1316.3 511.4 1316.5 525.4 1316.5 532.0 1316.6 514.7 1317.0 522.4 1317.0 515.5 1317.3 531.0 1317.5 516.3 1317.5 522.3 1317.6 513.1 1317.8 540.3 1318.0 513.7 1318.0 525.0 1318.1 532.0 1318.5 517.0 1318.5 525.2 1318.8 536.4 1318.9 514.1 1319.0 518.9 1319.0 523.6 1319.1 513.5 1319.5 529.7 1319.5 518.1 1319.8 516.7 1320.0 535.7 1320.0 516.4 1320.1 515.9 1320.3 533.7 1320.5 521.1 1320.5 529.0 1320.6 514.0 1320.7 529.1 1321.0 518.5 1321.0 528.9 1321.4 514.3 1321.5 536.4 1321.5 520.1 1321.6 514.2 1322.0 538.7 1322.0 531.7 1322.1 505.1 1322.5 544.1 1322.5 520.7 1322.6 513.4 1322.9 525.6 1323.0 516.6 1323.0 552.5 1323.5 510.1 1323.5 514.4 1323.7 538.7 1324.0 511.8 1324.0 519.0 1324.1 541.0 1324.4 512.7 1324.5 515.9 1324.6 523.5 1324.7 511.2 1324.8 540.4 1325.0 524.1 1325.0 524.4 1325.1 509.8 1325.3 533.9 1325.5 530.7 1325.5 515.1 1325.9 531.9 1325.9 513.1 1326.0 526.6 1326.0 531.6 1326.4 518.3 1326.5 518.6 1326.6 522.5 1326.6 530.9 1326.7 502.6 1327.0 518.5 1327.0 515.8 1327.3 526.1 1327.5 508.7 1327.5 518.8 1327.7 537.6 1327.8 509.3 1327.9 522.4 1328.0 529.2 1328.1 531.7 1328.3 512.6 1328.5 530.2 1328.5 524.0 1328.6 531.7 1329.0 513.7 1329.0 516.4 1329.1 537.6 1329.3 515.8 1329.5 524.3 1329.5 521.6 1329.6 537.2 1329.8 520.3 1330.0 525.2 1330.0 531.7 1330.3 517.3 1330.5 555.6 1330.6 519.1 1330.6 515.9 1330.8 538.0 1331.0 531.4 1331.0 514.2 1331.4 542.5 1331.5 538.1 1331.6 519.9 1331.8 529.6 1331.8 507.3 1332.0 523.2 1332.0 529.8 1332.1 532.3 1332.5 507.1 1332.5 511.2 1332.8 551.3 1333.0 518.7 1333.0 527.7 1333.3 536.2 1333.5 512.9 1333.5 526.4 1333.6 530.5 1333.8 514.4 1334.0 521.0 1334.0 523.9 1334.1 516.1 1334.2 525.7 1334.5 518.9 1334.5 516.3 1334.6 508.1 1335.0 533.2 1335.0 519.6 1335.4 514.7 1335.5 538.4 1335.5 524.6 1335.7 527.8 1335.8 509.5 1336.0 515.0 1336.0 517.2 1336.2 534.8 1336.3 513.3 1336.5 524.4 1336.5 550.6 1336.8 553.6 1336.9 511.0 1337.0 513.6 1337.0 530.5 1337.2 514.7 1337.4 538.3 1337.5 534.6 1337.5 519.5 1337.7 516.2 1337.9 538.6 1338.0 520.3 1338.0 527.6 1338.1 508.3 1338.4 533.9 1338.5 518.7 1338.5 517.5 1338.7 514.0 1338.7 538.3 1339.0 525.8 1339.0 517.9 1339.3 515.9 1339.4 538.7 1339.5 528.2 1339.5 524.0 1339.7 532.9 1339.9 520.7 1340.0 522.4 1340.0 516.5 1340.1 547.2 1340.2 512.0 1340.5 514.7 1340.5 521.0 1340.6 534.3 1340.9 511.7 1341.0 531.4 1341.0 515.9 1341.1 515.7 1341.4 524.2 1341.5 523.7 1341.5 540.0 1341.9 511.2 1342.0 515.6 1342.0 521.8 1342.2 512.8 1342.3 533.0 1342.5 516.4 1342.5 527.3 1342.6 538.3 1343.0 511.4 1343.0 518.0 1343.2 537.7 1343.3 515.6 1343.5 520.0 1343.5 524.8 1343.7 512.1 1344.0 533.4 1344.0 520.2 1344.2 537.4 1344.5 514.3 1344.5 515.0 1344.8 530.4 1345.0 519.4 1345.0 529.0 1345.2 550.3 1345.5 515.5 1345.5 511.3 1345.7 538.5 1346.0 518.2 1346.0 520.6 1346.2 540.6 1346.3 517.0 1346.5 525.9 1346.5 513.3 1346.9 527.7 1347.0 511.6 1347.0 528.7 1347.1 511.4 1347.5 514.4 1347.5 523.1 1347.6 528.1 1348.0 507.9 1348.0 510.0 1348.3 537.4 1348.5 524.7 1348.5 531.0 1348.8 512.3 1348.9 535.6 1349.0 521.0 1349.0 516.9 1349.3 526.6 1349.5 509.3 1349.5 527.5 1349.6 548.2 1349.8 518.5 1350.0 519.7 1350.0 522.3 1350.2 537.4 1350.5 506.9 1350.5 519.5 1350.6 511.2 1350.9 543.3 1351.0 520.6 1351.0 512.7 1351.3 533.6 1351.5 512.1 1351.5 536.7 1351.6 507.9 1352.0 510.2 1352.0 522.7 1352.2 533.1 1352.4 513.5 1352.5 523.8 1352.5 518.0 1352.6 513.3 1352.8 546.1 1353.0 536.6 1353.0 525.3 1353.3 507.1 1353.4 548.6 1353.5 531.9 1353.5 518.9 1353.6 526.7 1353.7 510.9 1354.0 524.1 1354.0 527.0 1354.2 512.4 1354.4 527.2 1354.5 516.4 1354.5 524.2 1354.8 508.0 1354.9 527.5 1355.0 519.0 1355.0 512.6 1355.1 536.6 1355.4 511.8 1355.5 519.0 1355.5 520.7 1355.9 511.9 1356.0 536.9 1356.0 554.0 1356.3 518.8 1356.5 529.1 1356.5 522.1 1356.6 539.4 1356.9 512.3 1357.0 527.5 1357.0 520.0 1357.1 544.4 1357.4 506.1 1357.5 521.2 1357.5 526.4 1357.9 514.2 1358.0 529.6 1358.0 519.9 1358.0 550.8 1358.4 512.0 1358.5 521.3 1358.5 521.1 1358.6 509.7 1358.6 528.8 1359.0 515.6 1359.0 518.9 1359.3 538.8 1359.5 515.6 1359.5 525.7 1359.6 520.5 1359.9 527.2 1360.0 526.1 1360.0 511.8 1360.2 504.3 1360.4 528.7 1360.5 524.2 1360.5 518.2 1360.9 544.6 1361.0 511.6 1361.0 524.6 1361.1 514.8 1361.2 529.1 1361.5 522.9 1361.5 523.2 1361.6 510.0 1361.7 530.6 1362.0 510.3 1362.0 519.3 1362.2 511.3 1362.3 528.0 1362.5 526.2 1362.5 520.5 1362.6 536.9 1362.8 510.4 1363.0 516.0 1363.0 514.9 1363.2 533.6 1363.5 522.4 1363.5 544.5 1363.8 507.8 1364.0 528.7 1364.0 524.3 1364.3 508.4 1364.5 529.2 1364.5 521.3 1364.6 514.5 1364.9 535.9 1365.0 530.9 1365.0 526.9 1365.1 540.9 1365.3 514.5 1365.5 526.8 1365.5 522.9 1365.7 512.4 1366.0 555.6 1366.0 524.8 1366.4 510.5 1366.4 532.0 1366.5 511.7 1366.5 525.8 1366.7 545.9 1366.7 512.2 1367.0 517.3 1367.0 515.9 1367.3 534.8 1367.5 514.3 1367.5 507.2 1367.6 532.0 1368.0 516.3 1368.0 527.1 1368.1 509.0 1368.4 531.4 1368.5 524.3 1368.5 518.8 1368.9 516.3 1369.0 534.8 1369.0 529.5 1369.2 512.0 1369.2 536.4 1369.5 519.3 1369.5 523.8 1369.5 530.0 1369.9 508.6 1370.0 529.6 1370.0 521.2 1370.2 502.9 1370.4 530.6 1370.5 521.0 1370.5 522.3 1370.9 536.6 1370.9 508.8 1371.0 520.0 1371.0 523.6 1371.4 530.6 1371.5 506.2 1371.5 513.8 1371.8 538.7 1371.8 508.7 1372.0 527.2 1372.0 520.9 1372.1 532.1 1372.2 513.3 1372.5 517.1 1372.5 521.6 1372.8 515.2 1373.0 542.7 1373.0 524.6 1373.0 512.8 1373.3 526.7 1373.4 512.0 1373.5 519.1 1373.5 511.9 1373.8 538.9 1374.0 528.4 1374.0 517.7 1374.3 513.6 1374.4 532.8 1374.5 522.6 1374.5 517.5 1374.6 512.6 1374.7 537.5 1375.0 535.9 1375.0 517.4 1375.2 535.2 1375.3 517.4 1375.5 531.3 1375.5 517.8 1375.5 509.1 1375.8 533.6 1376.0 527.8 1376.0 525.0 1376.1 536.1 1376.4 507.2 1376.5 531.2 1376.5 518.7 1376.7 547.0 1376.8 510.4 1377.0 518.3 1377.0 524.7 1377.1 509.7 1377.4 528.3 1377.5 517.4 1377.5 516.1 1377.6 509.6 1377.7 540.7 1378.0 510.9 1378.0 517.2 1378.2 512.1 1378.4 532.3 1378.5 518.9 1378.5 516.1 1378.8 510.2 1378.9 527.9 1379.0 517.1 1379.0 513.9 1379.2 530.4 1379.4 510.6 1379.5 522.7 1379.5 522.7 1379.6 536.8 1379.6 505.3 1380.0 521.7 1380.0 533.4 1380.2 512.2 1380.5 514.2 1380.5 524.1 1380.7 507.8 1380.8 558.6 1381.0 521.0 1381.0 532.0 1381.5 510.7 1381.5 524.9 1381.5 521.2 1381.8 556.2 1381.9 509.1 1382.0 528.2 1382.0 516.3 1382.1 533.4 1382.1 510.9 1382.5 531.0 1382.5 523.2 1382.6 513.9 1382.8 533.6 1383.0 533.4 1383.0 520.0 1383.2 512.7 1383.5 534.8 1383.5 539.8 1383.8 508.2 1384.0 523.0 1384.0 518.2 1384.1 534.4 1384.5 506.0 1384.5 518.7 1384.7 542.2 1385.0 510.3 1385.0 521.3 1385.2 531.4 1385.4 509.4 1385.5 521.7 1385.5 522.7 1385.6 527.9 1386.0 516.2 1386.0 517.9 1386.0 525.1 1386.4 542.4 1386.4 511.8 1386.5 526.0 1386.5 517.4 1386.6 506.9 1387.0 541.0 1387.0 516.4 1387.0 534.5 1387.2 517.1 1387.5 527.8 1387.5 517.9 1387.6 533.7 1388.0 516.3 1388.0 526.9 1388.0 519.4 1388.2 529.2 1388.5 505.9 1388.5 523.6 1388.7 511.2 1388.9 536.3 1389.0 534.2 1389.0 519.5 1389.1 514.1 1389.4 534.2 1389.5 525.7 1389.5 531.0 1389.6 535.5 1389.7 513.0 1390.0 527.8 1390.0 532.0 1390.4 515.1 1390.5 540.1 1390.5 522.5 1390.8 514.4 1390.9 534.9 1391.0 521.0 1391.0 525.8 1391.3 531.8 1391.5 514.5 1391.5 524.8 1391.5 526.2 1391.6 507.7 1391.9 532.9 1392.0 525.1 1392.0 551.9 1392.5 515.0 1392.5 525.4 1392.9 511.5 1392.9 539.2 1393.0 536.4 1393.0 520.3 1393.2 510.1 1393.3 533.8 1393.5 529.7 1393.5 525.7 1393.7 512.4 1393.9 536.2 1394.0 526.5 1394.0 522.9 1394.2 530.8 1394.3 516.5 1394.5 523.5 1394.5 518.2 1394.7 511.7 1395.0 538.7 1395.0 521.7 1395.3 513.7 1395.4 535.9 1395.5 520.0 1395.5 521.5 1395.9 529.7 1395.9 512.8 1396.0 523.7 1396.0 526.2 1396.2 509.1 1396.3 545.6 1396.5 520.2 1396.5 507.0 1396.7 532.2 1397.0 510.8 1397.0 518.9 1397.5 509.2 1397.5 532.6 1397.5 519.3 1397.6 532.6 1397.9 511.0 1398.0 521.5 1398.0 526.3 1398.1 531.6 1398.2 509.4 1398.5 517.3 1398.5 539.2 1398.6 542.4 1398.8 507.5 1399.0 522.3 1399.0 524.5 1399.0 507.7 1399.2 547.5 1399.5 515.6 1399.5 518.1 1399.7 515.7 1399.9 537.1 1400.0 533.0 1400.0 513.7 1400.3 529.9 1400.4 511.8 1400.5 524.3 1400.5 529.0 1400.8 541.4 1400.8 517.0 1401.0 526.8 1401.0 517.0 1401.4 538.8 1401.5 516.1 1401.5 526.8 1401.7 532.3 1401.9 510.7 1402.0 521.4 1402.0 521.9 1402.2 515.7 1402.4 538.3 1402.5 520.2 1402.5 517.5 1402.6 513.6 1402.9 529.1 1403.0 524.6 1403.0 514.6 1403.1 546.1 1403.2 511.7 1403.5 527.2 1403.5 524.4 1403.7 529.2 1403.9 514.7 1404.0 517.6 1404.0 535.3 1404.1 536.3 1404.2 518.2 1404.5 533.3 1404.5 517.3 1404.8 514.8 1404.9 535.4 1405.0 517.4 1405.0 526.9 1405.3 540.8 1405.4 503.2 1405.5 516.6 1405.5 535.3 1405.8 513.9 1405.9 542.7 1406.0 533.6 1406.0 521.9 1406.2 517.3 1406.5 533.2 1406.5 518.8 1406.5 522.9 1406.7 513.5 1406.8 536.8 1407.0 523.8 1407.0 538.1 1407.1 512.2 1407.5 528.4 1407.5 543.6 1407.9 511.7 1408.0 521.2 1408.0 526.8 1408.1 531.4 1408.3 511.8 1408.5 524.7 1408.5 519.6 1408.6 533.0 1408.8 516.0 1409.0 526.2 1409.0 515.3 1409.3 535.0 1409.4 509.8 1409.5 516.8 1409.5 521.3 1409.5 511.7 1409.7 536.1 1410.0 522.9 1410.0 509.2 1410.4 539.3 1410.5 528.6 1410.5 523.5 1410.5 507.4 1410.9 529.3 1411.0 520.9 1411.0 523.5 1411.0 513.7 1411.3 533.0 1411.5 515.3 1411.5 511.4 1411.6 544.6 1412.0 514.0 1412.0 514.4 1412.1 514.2 1412.4 531.3 1412.5 515.9 1412.5 510.5 1412.6 529.7 1413.0 515.4 1413.0 516.0 1413.1 542.4 1413.5 513.0 1413.5 530.8 1413.5 538.7 1413.8 510.6 1414.0 532.5 1414.0 522.1 1414.1 511.8 1414.2 537.6 1414.5 529.1 1414.5 518.9 1414.6 509.1 1414.8 546.2 1415.0 520.2 1415.0 530.5 1415.0 512.3 1415.5 535.3 1415.5 529.0 1415.5 520.7 1415.8 512.9 1415.9 532.8 1416.0 526.2 1416.0 522.9 1416.2 528.6 1416.4 507.4 1416.5 517.1 1416.5 517.9 1416.6 540.5 1416.9 511.8 1417.0 513.2 1417.0 524.3 1417.0 540.0 1417.1 515.9 1417.5 517.4 1417.5 515.8 1417.6 534.4 1417.9 512.1 1418.0 516.1 1418.0 527.3 1418.1 536.2 1418.2 510.2 1418.5 531.9 1418.5 513.0 1418.8 511.4 1419.0 542.9 1419.0 520.2 1419.0 518.4 1419.1 509.6 1419.4 533.0 1419.5 532.1 1419.5 532.9 1419.6 515.3 1419.6 539.8 1420.0 519.5 1420.0 517.9 1420.2 530.3 1420.4 514.8 1420.5 525.1 1420.5 532.6 1420.6 534.8 1420.9 512.4 1421.0 518.9 1421.0 522.5 1421.2 542.5 1421.5 509.4 1421.5 524.6 1421.5 519.0 1421.7 541.2 1422.0 510.1 1422.0 541.2 1422.0 529.4 1422.3 509.5 1422.4 534.6 1422.5 511.6 1422.5 507.4 1422.8 545.4 1423.0 523.6 1423.0 526.3 1423.0 514.0 1423.1 549.2 1423.5 524.6 1423.5 518.5 1423.6 533.4 1423.9 511.0 1424.0 527.2 1424.0 532.7 1424.0 515.8 1424.3 534.6 1424.5 524.1 1424.5 523.7 1424.9 535.6 1425.0 510.7 1425.0 518.2 1425.0 523.9 1425.2 548.3 1425.2 512.1 1425.5 520.8 1425.5 525.8 1425.7 511.9 1425.9 534.7 1426.0 515.3 1426.0 517.2 1426.1 511.6 1426.3 530.9 1426.5 527.6 1426.5 510.8 1426.9 539.0 1427.0 515.6 1427.0 515.0 1427.0 514.7 1427.3 535.3 1427.5 519.2 1427.5 511.6 1427.6 531.8 1428.0 516.8 1428.0 524.1 1428.2 516.0 1428.5 531.5 1428.5 526.2 1428.5 519.2 1428.6 535.1 1428.8 515.4 1429.0 522.7 1429.0 532.1 1429.3 507.7 1429.4 540.0 1429.5 525.5 1429.5 521.8 1429.6 539.0 1429.8 512.8 1430.0 522.5 1430.0 531.9 1430.2 513.7 1430.5 518.4 1430.5 527.6 1430.8 546.5 1431.0 511.6 1431.0 536.7 1431.0 525.7 1431.4 512.4 1431.5 537.9 1431.5 539.4 1431.8 540.3 1431.8 505.6 1432.0 512.2 1432.0 522.3 1432.1 551.9 1432.5 511.7 1432.5 518.5 1432.5 509.0 1432.9 532.3 1433.0 523.6 1433.0 534.0 1433.4 512.7 1433.5 513.4 1433.5 520.3 1433.6 507.7 1433.7 531.0 1434.0 520.7 1434.0 520.4 1434.1 512.6 1434.3 539.6 1434.5 527.9 1434.5 520.0 1434.6 513.8 1434.9 532.3 1435.0 515.1 1435.0 521.3 1435.1 510.7 1435.3 535.6 1435.5 533.6 1435.5 524.7 1435.9 510.0 1435.9 541.0 1436.0 519.7 1436.0 519.6 1436.1 511.5 1436.4 533.3 1436.5 513.3 1436.5 533.7 1436.6 511.5 1436.7 556.6 1437.0 520.2 1437.0 515.1 1437.1 534.6 1437.1 513.5 1437.5 525.3 1437.5 519.3 1437.6 532.7 1437.9 513.1 1438.0 516.4 1438.0 523.1 1438.2 533.7 1438.4 512.4 1438.5 527.8 1438.5 517.0 1438.8 511.5 1438.8 538.0 1439.0 512.5 1439.0 521.9 1439.3 509.1 1439.5 552.1 1439.5 525.1 1439.5 513.9 1439.6 529.6 1439.8 513.4 1440.0 517.0 1440.0 529.4 1440.0 534.9 1440.4 514.8 1440.5 526.8 1440.5 515.4 1440.6 534.5 1440.7 513.4 1441.0 525.6 1441.0 518.8 1441.1 512.4 1441.5 539.2 1441.5 509.9 1441.7 550.9 1442.0 516.6 1442.0 531.8 1442.1 515.1 1442.5 541.7 1442.5 533.9 1442.6 510.7 1442.6 540.3 1443.0 513.1 1443.0 528.4 1443.4 510.0 1443.5 518.9 1443.5 521.2 1443.8 531.1 1443.8 514.7 1444.0 530.5 1444.0 537.3 1444.1 538.3 1444.2 507.9 1444.5 532.8 1444.5 535.6 1444.6 536.5 1444.7 511.3 1445.0 527.1 1445.0 516.5 1445.1 513.1 1445.1 536.9 1445.5 515.0 1445.5 523.9 1445.7 510.9 1445.9 531.3 1446.0 521.3 1446.0 519.6 1446.2 508.6 1446.4 546.4 1446.5 508.7 1446.5 522.7 1446.8 506.3 1446.9 538.4 1447.0 528.9 1447.0 525.1 1447.2 503.8 1447.5 548.1 1447.5 524.0 1447.6 536.3 1447.9 506.8 1448.0 528.6 1448.0 521.7 1448.2 536.1 1448.2 508.4 1448.5 525.3 1448.5 523.8 1448.8 535.9 1449.0 510.3 1449.0 514.1 1449.0 522.5 1449.2 542.4 1449.2 511.6 1449.5 527.2 1449.5 521.7 1449.8 544.5 1450.0 511.2 1450.0 545.0 1450.1 510.1 1450.5 522.4 1450.5 523.7 1450.6 544.3 1450.8 510.9 1451.0 518.8 1451.0 534.1 1451.2 541.6 1451.4 511.9 1451.5 533.6 1451.5 513.1 1451.8 510.6 1451.8 531.5 1452.0 520.6 1452.0 527.8 1452.1 532.0 1452.4 509.9 1452.5 518.1 1452.5 525.0 1452.7 531.1 1452.8 509.9 1453.0 521.4 1453.0 516.7 1453.2 534.7 1453.4 513.4 1453.5 520.9 1453.5 529.0 1453.7 530.3 1453.7 513.0 1454.0 524.4 1454.0 515.6 1454.4 536.9 1454.5 512.2 1454.5 532.5 1454.5 509.2 1455.0 539.0 1455.0 530.8 1455.4 505.9 1455.5 508.9 1455.5 514.9 1456.0 534.8 1456.0 505.8 1456.0 522.2 1456.2 529.2 1456.3 510.2 1456.5 514.4 1456.5 533.2 1456.6 513.6 1456.7 545.1 1457.0 524.0 1457.0 521.1 1457.2 511.4 1457.5 533.9 1457.5 517.0 1457.5 532.2 1457.6 509.2 1457.8 538.6 1458.0 520.9 1458.0 528.9 1458.4 512.8 1458.5 522.9 1458.5 522.2 1458.6 552.0 1458.7 515.8 1459.0 517.0 1459.0 522.0 1459.3 517.3 1459.3 551.9 1459.5 519.3 1459.5 528.1 1459.6 530.2 1459.8 506.7 1460.0 515.9 1460.0 521.3 1460.2 527.7 1460.4 508.6 1460.5 512.3 1460.5 517.4 1460.6 510.3 1460.9 528.5 1461.0 511.9 1461.0 521.5 1461.1 534.1 1461.3 513.2 1461.5 514.1 1461.5 530.6 1461.6 508.7 1461.8 534.9 1462.0 526.4 1462.0 540.0 1462.3 506.2 1462.5 523.5 1462.5 523.1 1462.7 531.5 1462.9 510.3 1463.0 511.8 1463.0 522.1 1463.3 536.8 1463.4 515.7 1463.5 522.3 1463.5 520.8 1463.6 506.6 1463.7 550.2 1464.0 522.0 1464.0 525.7 1464.3 538.6 1464.5 513.8 1464.5 536.6 1464.7 541.4 1465.0 511.4 1465.0 516.9 1465.1 537.8 1465.5 506.6 1465.5 524.4 1465.5 523.5 1465.5 534.0 1465.7 507.8 1466.0 530.2 1466.0 516.2 1466.1 545.7 1466.1 511.1 1466.5 518.9 1466.5 522.2 1466.9 545.5 1466.9 512.2 1467.0 519.3 1467.0 503.2 1467.4 542.2 1467.5 518.4 1467.5 529.0 1467.5 536.6 1467.7 513.3 1468.0 521.9 1468.0 515.8 1468.3 509.6 1468.5 532.5 1468.5 512.6 1468.8 530.6 1468.9 509.0 1469.0 516.8 1469.0 520.4 1469.2 510.7 1469.2 537.4 1469.5 524.6 1469.5 533.5 1469.6 545.0 1469.9 510.8 1470.0 520.1 1470.0 516.3 1470.1 544.6 1470.5 507.7 1470.5 524.0 1470.8 549.6 1471.0 506.4 1471.0 520.2 1471.0 517.7 1471.1 509.6 1471.3 548.0 1471.5 518.6 1471.5 520.3 1471.7 533.3 1471.9 510.5 1472.0 532.6 1472.0 521.4 1472.2 514.0 1472.2 537.5 1472.5 526.7 1472.5 527.7 1472.6 510.1 1472.8 535.9 1473.0 517.3 1473.0 525.7 1473.1 513.4 1473.4 541.5 1473.5 527.8 1473.5 520.8 1473.6 510.3 1473.8 539.9 1474.0 529.7 1474.0 529.5 1474.2 546.5 1474.4 507.4 1474.5 523.0 1474.5 520.9 1474.6 533.2 1474.7 509.4 1475.0 525.5 1475.0 523.4 1475.3 512.7 1475.4 542.4 1475.5 524.1 1475.5 526.4 1475.9 511.1 1476.0 538.0 1476.0 530.9 1476.2 532.3 1476.4 513.0 1476.5 519.7 1476.5 514.6 1476.7 537.3 1477.0 520.3 1477.0 528.0 1477.2 545.9 1477.4 505.6 1477.5 524.7 1477.5 521.3 1477.7 514.1 1478.0 530.4 1478.0 530.2 1478.0 520.8 1478.4 540.3 1478.5 510.1 1478.5 525.7 1478.5 512.3 1478.8 536.2 1478.9 511.9 1479.0 515.2 1479.0 518.4 1479.1 508.7 1479.4 528.5 1479.5 515.0 1479.5 524.0 1479.7 511.5 1479.8 533.0 1480.0 521.4 1480.0 531.8 1480.1 541.7 1480.2 514.5 1480.5 523.9 1480.5 523.7 1480.8 537.4 1480.9 510.5 1481.0 519.3 1481.0 512.3 1481.1 534.0 1481.5 511.7 1481.5 516.4 1481.6 538.3 1481.8 513.8 1482.0 516.8 1482.0 527.8 1482.3 508.7 1482.5 513.1 1482.5 530.1 1482.6 507.1 1482.7 531.9 1483.0 518.4 1483.0 524.2 1483.2 540.1 1483.5 508.8 1483.5 513.9 1483.5 518.6 1483.7 533.5 1483.7 512.8 1484.0 529.4 1484.0 519.6 1484.3 530.4 1484.3 513.1 1484.4 518.3" stroke="#3a38d9" stroke-width="1.6" fill="none" stroke-linejoin="round"/>
  <g fill="#000">
    <rect x="130" y="331" width="1395" height="1"/>
    <rect x="130" y="588" width="1395" height="1"/>
    <rect x="130" y="331" width="2" height="258"/>
    <rect x="1524" y="331" width="1" height="258"/>
  </g>
  <g font-size="18" fill="#444" text-anchor="end">
    <text x="126" y="338" textLength="39.8" lengthAdjust="spacingAndGlyphs">1E+3</text>
    <text x="126" y="370">100</text>
    <text x="126" y="402">10</text>
    <text x="126" y="434">1</text>
    <text x="126" y="466">0.1</text>
    <text x="126" y="498">0.01</text>
    <text x="126" y="530" textLength="39.8" lengthAdjust="spacingAndGlyphs">1E−3</text>
    <text x="126" y="562" textLength="39.8" lengthAdjust="spacingAndGlyphs">1E−4</text>
    <text x="126" y="594" textLength="39.8" lengthAdjust="spacingAndGlyphs">1E−5</text>
  </g>
  <g font-size="18" fill="#444" text-anchor="middle">
    <text x="131" y="611">10</text>
    <text x="596.5" y="611">100</text>
    <text x="1060" y="611" textLength="39.8" lengthAdjust="spacingAndGlyphs">1E+3</text>
    <text x="1524.5" y="611" textLength="39.8" lengthAdjust="spacingAndGlyphs">1E+4</text>
  </g>
  <text x="828.6" y="641.1" font-size="22" font-weight="bold" text-anchor="middle" textLength="154.4" lengthAdjust="spacingAndGlyphs">Frequency (Hz)</text>
  <text transform="translate(75.3 460.2) rotate(-90)" font-size="22" font-weight="bold" text-anchor="middle" textLength="93.9" lengthAdjust="spacingAndGlyphs">y (EU<tspan font-size="15" dy="-8">2</tspan><tspan dy="8">/Hz</tspan></text>
</svg>

<!-- controls row 1 -->
<div class="box" style="top:706px"></div>
<div class="t" style="left:15px;width:310px;text-align:center;top:715px">Tonal Frequency</div>
<div class="t" style="left:325px;width:310px;text-align:center;top:715px">Tonal Amplitude</div>
<div class="t" style="left:635px;width:310px;text-align:center;top:715px">Broad-Band RMS</div>
<div class="t" style="left:945px;width:310px;text-align:center;top:715px">Filter Center Freq</div>
<div class="t" style="left:1255px;width:310px;text-align:center;top:715px">Filter</div>
<div class="track" style="left:56px;top:773px;width:228px"></div>
<div class="track" style="left:366px;top:773px;width:228px"></div>
<div class="track" style="left:676px;top:773px;width:229px"></div>
<div class="th r" style="left:64px;top:767px"></div>
<div class="th r" style="left:385px;top:767px"></div>
<div class="th r" style="left:726px;top:767px"></div>
<div class="v" style="left:15px;width:310px;text-align:center;top:821px">100 Hz</div>
<div class="v" style="left:325px;width:310px;text-align:center;top:821px">1.0 EU</div>
<div class="v" style="left:635px;width:310px;text-align:center;top:821px">3.20 EU</div>

<!-- controls row 2 -->
<div class="box" style="top:880px"></div>
<div class="t" style="left:15px;width:300px;text-align:center;top:889px">Sampling Frequency</div>
<div class="t" style="left:315px;width:300px;text-align:center;top:889px">Number of time blocks</div>
<div class="t" style="left:615px;width:300px;text-align:center;top:889px">Overlap</div>
<div class="t" style="left:915px;width:300px;text-align:center;top:889px">Windowing</div>
<div class="t" style="left:1215px;width:350px;text-align:center;top:889px">Spectrum Type</div>
<div class="track" style="left:54px;top:947px;width:222px"></div>
<div class="track" style="left:355px;top:947px;width:220px"></div>
<div class="th b" style="left:252px;top:941px"></div>
<div class="th b" style="left:355px;top:941px"></div>
<div class="v" style="left:15px;width:300px;text-align:center;top:995px">16384 Hz</div>
<div class="v" style="left:315px;width:300px;text-align:center;top:995px">4</div>
<div style="position:absolute;left:1218px;top:939px;width:343px;height:24px;border:1px solid #767676;border-radius:3px;background:#fff;"></div>
<div class="v" style="left:1225.5px;top:941px;font-size:20px">Power Spectral Density</div>
<svg style="position:absolute;left:1540px;top:944px" width="20" height="16" viewBox="0 0 20 16"><path d="M3.5 4.5 L10 11 L16.5 4.5" stroke="#000" stroke-width="2" fill="none"/></svg>
</body></html>
